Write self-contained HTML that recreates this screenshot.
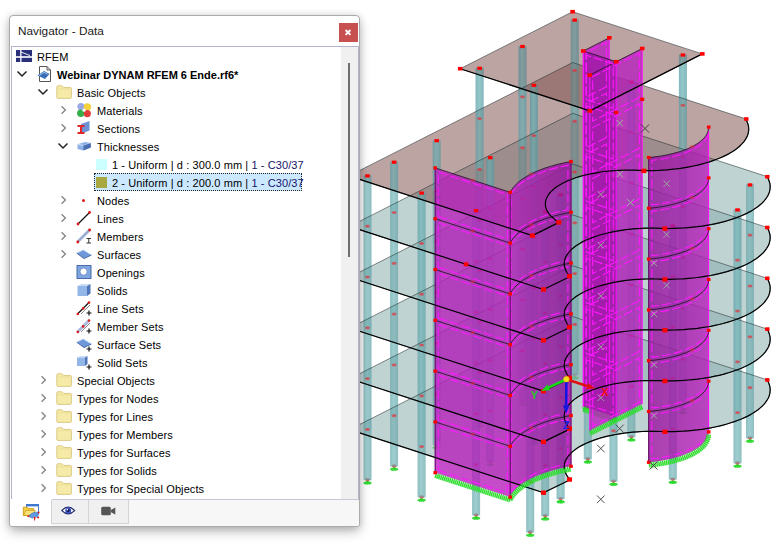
<!DOCTYPE html>
<html><head><meta charset="utf-8"><title>Navigator - Data</title>
<style>
html,body{margin:0;padding:0;background:#fff;}
body{width:772px;height:546px;position:relative;overflow:hidden;font-family:"Liberation Sans",sans-serif;}
#panel{position:absolute;left:9px;top:15px;width:351px;height:512px;box-sizing:border-box;background:#fff;border:1px solid #ababab;border-radius:4px 4px 3px 3px;box-shadow:0 5px 12px -1px rgba(0,0,0,0.30),0 0 7px rgba(0,0,0,0.12);}
#title{position:absolute;left:18px;top:23px;font-size:11.8px;color:#1a1a1a;line-height:16px;white-space:nowrap;}
#close{position:absolute;left:339px;top:23px;width:18.6px;height:18.6px;background:#c75050;}
#tree{position:absolute;left:11px;top:46px;width:347.5px;height:454px;box-sizing:border-box;border:1px solid #b4b4cc;border-bottom:1px solid #c8c8d8;background:#fff;}
#track{position:absolute;left:341px;top:47px;width:16.5px;height:452px;background:#f0f0f0;}
#thumb{position:absolute;left:348px;top:63px;width:2px;height:194px;background:#6e6e6e;}
.row{position:absolute;left:0;width:340px;height:18px;}
.a{position:absolute;display:block;line-height:0;}
.sw{width:10.5px;height:10.5px;}
.t{position:absolute;top:1px;font-size:11px;letter-spacing:0.1px;line-height:18px;color:#000;white-space:nowrap;}
.nv{color:#14146a;}
.t.b{font-weight:bold;letter-spacing:0;}
.sel{position:absolute;left:94px;top:0;width:208px;height:18px;box-sizing:border-box;background:#cce8ff;border:1px dotted #222;}
#tabs{position:absolute;left:10px;top:500px;width:349px;height:26px;background:#f7f7f7;border-radius:0 0 3px 3px;}
.tab{position:absolute;top:500px;height:23.5px;box-sizing:border-box;background:#f0f0f0;border:1px solid #d3d3d8;border-top:none;}
#tab1{position:absolute;left:10px;top:499px;width:42px;height:27px;background:#fff;border-radius:0 0 0 3px;}
</style></head><body>
<svg width="772" height="546" viewBox="0 0 772 546" style="position:absolute;left:0;top:0">
<defs><linearGradient id="cg" x1="0" x2="1" y1="0" y2="0"><stop offset="0" stop-color="rgb(78,152,158)"/><stop offset="0.45" stop-color="rgb(100,176,180)"/><stop offset="1" stop-color="rgb(78,152,158)"/></linearGradient></defs>
<ellipse cx="574.7" cy="378.0" rx="3.9" ry="1.3" fill="#22d822" fill-opacity="0.85" stroke="#10d010" stroke-width="0.8" stroke-dasharray="1.2 0.7"/><path d="M572.3 378.0 L574.7 375.5 L577.1 378.0 Z" fill="#20d820"/><ellipse cx="574.7" cy="374.6" rx="2.4" ry="1.6" fill="#d83030" fill-opacity="0.8"/>
<ellipse cx="522.5" cy="404.4" rx="3.9" ry="1.3" fill="#22d822" fill-opacity="0.85" stroke="#10d010" stroke-width="0.8" stroke-dasharray="1.2 0.7"/><path d="M520.1 404.4 L522.5 401.9 L524.9 404.4 Z" fill="#20d820"/><ellipse cx="522.5" cy="401.0" rx="2.4" ry="1.6" fill="#d83030" fill-opacity="0.8"/>
<ellipse cx="479.6" cy="426.2" rx="3.9" ry="1.3" fill="#22d822" fill-opacity="0.85" stroke="#10d010" stroke-width="0.8" stroke-dasharray="1.2 0.7"/><path d="M477.2 426.2 L479.6 423.7 L482.0 426.2 Z" fill="#20d820"/><ellipse cx="479.6" cy="422.8" rx="2.4" ry="1.6" fill="#d83030" fill-opacity="0.8"/>
<ellipse cx="436.7" cy="447.8" rx="3.9" ry="1.3" fill="#22d822" fill-opacity="0.85" stroke="#10d010" stroke-width="0.8" stroke-dasharray="1.2 0.7"/><path d="M434.3 447.8 L436.7 445.3 L439.1 447.8 Z" fill="#20d820"/><ellipse cx="436.7" cy="444.4" rx="2.4" ry="1.6" fill="#d83030" fill-opacity="0.8"/>
<ellipse cx="394.1" cy="469.3" rx="3.9" ry="1.3" fill="#22d822" fill-opacity="0.85" stroke="#10d010" stroke-width="0.8" stroke-dasharray="1.2 0.7"/><path d="M391.7 469.3 L394.1 466.8 L396.5 469.3 Z" fill="#20d820"/><ellipse cx="394.1" cy="465.9" rx="2.4" ry="1.6" fill="#d83030" fill-opacity="0.8"/>
<ellipse cx="367.5" cy="483.0" rx="3.9" ry="1.3" fill="#22d822" fill-opacity="0.85" stroke="#10d010" stroke-width="0.8" stroke-dasharray="1.2 0.7"/><path d="M365.1 483.0 L367.5 480.5 L369.9 483.0 Z" fill="#20d820"/><ellipse cx="367.5" cy="479.6" rx="2.4" ry="1.6" fill="#d83030" fill-opacity="0.8"/>
<ellipse cx="533.9" cy="443.2" rx="3.9" ry="1.3" fill="#22d822" fill-opacity="0.85" stroke="#10d010" stroke-width="0.8" stroke-dasharray="1.2 0.7"/><path d="M531.5 443.2 L533.9 440.7 L536.3 443.2 Z" fill="#20d820"/><ellipse cx="533.9" cy="439.8" rx="2.4" ry="1.6" fill="#d83030" fill-opacity="0.8"/>
<ellipse cx="490.2" cy="464.8" rx="3.9" ry="1.3" fill="#22d822" fill-opacity="0.85" stroke="#10d010" stroke-width="0.8" stroke-dasharray="1.2 0.7"/><path d="M487.8 464.8 L490.2 462.3 L492.6 464.8 Z" fill="#20d820"/><ellipse cx="490.2" cy="461.4" rx="2.4" ry="1.6" fill="#d83030" fill-opacity="0.8"/>
<ellipse cx="421.6" cy="500.2" rx="3.9" ry="1.3" fill="#22d822" fill-opacity="0.85" stroke="#10d010" stroke-width="0.8" stroke-dasharray="1.2 0.7"/><path d="M419.2 500.2 L421.6 497.7 L424.0 500.2 Z" fill="#20d820"/><ellipse cx="421.6" cy="496.8" rx="2.4" ry="1.6" fill="#d83030" fill-opacity="0.8"/>
<ellipse cx="682.9" cy="412.9" rx="3.9" ry="1.3" fill="#22d822" fill-opacity="0.85" stroke="#10d010" stroke-width="0.8" stroke-dasharray="1.2 0.7"/><path d="M680.5 412.9 L682.9 410.4 L685.3 412.9 Z" fill="#20d820"/><ellipse cx="682.9" cy="409.5" rx="2.4" ry="1.6" fill="#d83030" fill-opacity="0.8"/>
<ellipse cx="631.4" cy="440.0" rx="3.9" ry="1.3" fill="#22d822" fill-opacity="0.85" stroke="#10d010" stroke-width="0.8" stroke-dasharray="1.2 0.7"/><path d="M629.0 440.0 L631.4 437.5 L633.8 440.0 Z" fill="#20d820"/><ellipse cx="631.4" cy="436.6" rx="2.4" ry="1.6" fill="#d83030" fill-opacity="0.8"/>
<ellipse cx="587.8" cy="462.1" rx="3.9" ry="1.3" fill="#22d822" fill-opacity="0.85" stroke="#10d010" stroke-width="0.8" stroke-dasharray="1.2 0.7"/><path d="M585.4 462.1 L587.8 459.6 L590.2 462.1 Z" fill="#20d820"/><ellipse cx="587.8" cy="458.7" rx="2.4" ry="1.6" fill="#d83030" fill-opacity="0.8"/>
<ellipse cx="476.1" cy="518.2" rx="3.9" ry="1.3" fill="#22d822" fill-opacity="0.85" stroke="#10d010" stroke-width="0.8" stroke-dasharray="1.2 0.7"/><path d="M473.7 518.2 L476.1 515.7 L478.5 518.2 Z" fill="#20d820"/><ellipse cx="476.1" cy="514.8" rx="2.4" ry="1.6" fill="#d83030" fill-opacity="0.8"/>
<ellipse cx="530.2" cy="535.3" rx="3.9" ry="1.3" fill="#22d822" fill-opacity="0.85" stroke="#10d010" stroke-width="0.8" stroke-dasharray="1.2 0.7"/><path d="M527.8 535.3 L530.2 532.8 L532.6 535.3 Z" fill="#20d820"/><ellipse cx="530.2" cy="531.9" rx="2.4" ry="1.6" fill="#d83030" fill-opacity="0.8"/>
<ellipse cx="545.2" cy="519.0" rx="3.9" ry="1.3" fill="#22d822" fill-opacity="0.85" stroke="#10d010" stroke-width="0.8" stroke-dasharray="1.2 0.7"/><path d="M542.8 519.0 L545.2 516.5 L547.6 519.0 Z" fill="#20d820"/><ellipse cx="545.2" cy="515.6" rx="2.4" ry="1.6" fill="#d83030" fill-opacity="0.8"/>
<ellipse cx="560.6" cy="501.9" rx="3.9" ry="1.3" fill="#22d822" fill-opacity="0.85" stroke="#10d010" stroke-width="0.8" stroke-dasharray="1.2 0.7"/><path d="M558.2 501.9 L560.6 499.4 L563.0 501.9 Z" fill="#20d820"/><ellipse cx="560.6" cy="498.5" rx="2.4" ry="1.6" fill="#d83030" fill-opacity="0.8"/>
<ellipse cx="613.5" cy="484.4" rx="3.9" ry="1.3" fill="#22d822" fill-opacity="0.85" stroke="#10d010" stroke-width="0.8" stroke-dasharray="1.2 0.7"/><path d="M611.1 484.4 L613.5 481.9 L615.9 484.4 Z" fill="#20d820"/><ellipse cx="613.5" cy="481.0" rx="2.4" ry="1.6" fill="#d83030" fill-opacity="0.8"/>
<ellipse cx="750.0" cy="441.2" rx="3.9" ry="1.3" fill="#22d822" fill-opacity="0.85" stroke="#10d010" stroke-width="0.8" stroke-dasharray="1.2 0.7"/><path d="M747.6 441.2 L750.0 438.7 L752.4 441.2 Z" fill="#20d820"/><ellipse cx="750.0" cy="437.8" rx="2.4" ry="1.6" fill="#d83030" fill-opacity="0.8"/>
<ellipse cx="737.5" cy="466.2" rx="3.9" ry="1.3" fill="#22d822" fill-opacity="0.85" stroke="#10d010" stroke-width="0.8" stroke-dasharray="1.2 0.7"/><path d="M735.1 466.2 L737.5 463.7 L739.9 466.2 Z" fill="#20d820"/><ellipse cx="737.5" cy="462.8" rx="2.4" ry="1.6" fill="#d83030" fill-opacity="0.8"/>
<ellipse cx="672.8" cy="482.4" rx="3.9" ry="1.3" fill="#22d822" fill-opacity="0.85" stroke="#10d010" stroke-width="0.8" stroke-dasharray="1.2 0.7"/><path d="M670.4 482.4 L672.8 479.9 L675.2 482.4 Z" fill="#20d820"/><ellipse cx="672.8" cy="479.0" rx="2.4" ry="1.6" fill="#d83030" fill-opacity="0.8"/>
<rect x="570.7" y="324.35" width="8.0" height="50.80" fill="url(#cg)" fill-opacity="0.5"/>
<rect x="518.5" y="350.82" width="8.0" height="50.80" fill="url(#cg)" fill-opacity="0.5"/>
<rect x="475.6" y="372.57" width="8.0" height="50.80" fill="url(#cg)" fill-opacity="0.5"/>
<rect x="432.7" y="394.23" width="8.0" height="50.80" fill="url(#cg)" fill-opacity="0.5"/>
<rect x="390.1" y="415.73" width="8.0" height="50.80" fill="url(#cg)" fill-opacity="0.5"/>
<rect x="363.5" y="429.40" width="8.0" height="50.80" fill="url(#cg)" fill-opacity="0.5"/>
<rect x="529.9" y="389.64" width="8.0" height="50.80" fill="url(#cg)" fill-opacity="0.5"/>
<rect x="486.2" y="411.23" width="8.0" height="50.80" fill="url(#cg)" fill-opacity="0.5"/>
<rect x="417.6" y="446.57" width="8.0" height="50.80" fill="url(#cg)" fill-opacity="0.5"/>
<rect x="678.9" y="359.29" width="8.0" height="50.80" fill="url(#cg)" fill-opacity="0.5"/>
<rect x="627.4" y="386.41" width="8.0" height="50.80" fill="url(#cg)" fill-opacity="0.5"/>
<rect x="583.8" y="408.52" width="8.0" height="50.80" fill="url(#cg)" fill-opacity="0.5"/>
<rect x="472.1" y="464.64" width="8.0" height="50.80" fill="url(#cg)" fill-opacity="0.5"/>
<rect x="526.2" y="481.67" width="8.0" height="50.80" fill="url(#cg)" fill-opacity="0.5"/>
<rect x="541.2" y="465.42" width="8.0" height="50.80" fill="url(#cg)" fill-opacity="0.5"/>
<rect x="556.6" y="448.28" width="8.0" height="50.80" fill="url(#cg)" fill-opacity="0.5"/>
<rect x="609.5" y="430.79" width="8.0" height="50.80" fill="url(#cg)" fill-opacity="0.5"/>
<rect x="746.0" y="387.56" width="8.0" height="50.80" fill="url(#cg)" fill-opacity="0.5"/>
<rect x="733.5" y="412.61" width="8.0" height="50.80" fill="url(#cg)" fill-opacity="0.5"/>
<rect x="668.8" y="428.78" width="8.0" height="50.80" fill="url(#cg)" fill-opacity="0.5"/>
<polygon points="572.6,316.5 767.0,379.8 768.1,381.6 768.9,383.5 769.5,385.4 770.0,387.4 770.2,389.3 770.1,391.2 769.9,393.1 769.4,395.1 768.8,397.0 767.9,398.8 766.7,400.7 765.4,402.6 763.9,404.4 762.2,406.2 760.2,407.9 758.1,409.7 755.8,411.3 753.2,413.0 750.5,414.6 747.7,416.1 744.6,417.6 741.4,419.0 738.0,420.3 734.5,421.6 730.8,422.8 727.0,424.0 723.1,425.1 719.1,426.1 714.9,427.0 710.7,427.9 706.3,428.6 701.9,429.3 697.4,429.9 692.8,430.4 688.2,430.8 683.5,431.2 678.8,431.4 674.1,431.6 669.4,431.7 664.6,431.7 660.2,431.5 655.7,431.4 651.1,431.3 646.5,431.4 642.0,431.5 637.4,431.8 632.9,432.1 628.5,432.6 624.1,433.1 619.8,433.8 615.6,434.5 611.5,435.3 607.5,436.2 603.6,437.2 599.8,438.2 596.2,439.4 592.8,440.6 589.5,441.9 586.3,443.2 583.4,444.6 580.6,446.1 578.1,447.6 575.7,449.2 573.5,450.9 571.6,452.5 569.9,454.3 568.4,456.0 567.1,457.8 566.0,459.6 565.2,461.4 564.6,463.3 564.3,465.1 564.2,467.0 564.4,468.8 564.7,470.7 565.4,472.5 566.2,474.4 567.3,476.2 568.6,477.9 570.2,479.7 543.5,492.7 349.6,429.6" fill="rgb(134,170,170)" fill-opacity="0.52"/>
<rect x="570.7" y="273.55" width="8.0" height="50.80" fill="url(#cg)" fill-opacity="0.5"/>
<rect x="518.5" y="300.02" width="8.0" height="50.80" fill="url(#cg)" fill-opacity="0.5"/>
<rect x="475.6" y="321.77" width="8.0" height="50.80" fill="url(#cg)" fill-opacity="0.5"/>
<rect x="432.7" y="343.43" width="8.0" height="50.80" fill="url(#cg)" fill-opacity="0.5"/>
<rect x="390.1" y="364.93" width="8.0" height="50.80" fill="url(#cg)" fill-opacity="0.5"/>
<rect x="363.5" y="378.60" width="8.0" height="50.80" fill="url(#cg)" fill-opacity="0.5"/>
<rect x="529.9" y="338.84" width="8.0" height="50.80" fill="url(#cg)" fill-opacity="0.5"/>
<rect x="486.2" y="360.43" width="8.0" height="50.80" fill="url(#cg)" fill-opacity="0.5"/>
<rect x="417.6" y="395.77" width="8.0" height="50.80" fill="url(#cg)" fill-opacity="0.5"/>
<rect x="678.9" y="308.49" width="8.0" height="50.80" fill="url(#cg)" fill-opacity="0.5"/>
<rect x="627.4" y="335.61" width="8.0" height="50.80" fill="url(#cg)" fill-opacity="0.5"/>
<rect x="583.8" y="357.72" width="8.0" height="50.80" fill="url(#cg)" fill-opacity="0.5"/>
<rect x="472.1" y="413.84" width="8.0" height="50.80" fill="url(#cg)" fill-opacity="0.5"/>
<rect x="526.2" y="430.87" width="8.0" height="50.80" fill="url(#cg)" fill-opacity="0.5"/>
<rect x="541.2" y="414.62" width="8.0" height="50.80" fill="url(#cg)" fill-opacity="0.5"/>
<rect x="556.6" y="397.48" width="8.0" height="50.80" fill="url(#cg)" fill-opacity="0.5"/>
<rect x="609.5" y="379.99" width="8.0" height="50.80" fill="url(#cg)" fill-opacity="0.5"/>
<rect x="746.0" y="336.76" width="8.0" height="50.80" fill="url(#cg)" fill-opacity="0.5"/>
<rect x="733.5" y="361.81" width="8.0" height="50.80" fill="url(#cg)" fill-opacity="0.5"/>
<rect x="668.8" y="377.98" width="8.0" height="50.80" fill="url(#cg)" fill-opacity="0.5"/>
<polygon points="572.6,265.7 767.0,329.0 768.1,330.8 768.9,332.7 769.5,334.6 770.0,336.6 770.2,338.5 770.1,340.4 769.9,342.3 769.4,344.3 768.8,346.2 767.9,348.0 766.7,349.9 765.4,351.8 763.9,353.6 762.2,355.4 760.2,357.1 758.1,358.9 755.8,360.5 753.2,362.2 750.5,363.8 747.7,365.3 744.6,366.8 741.4,368.2 738.0,369.5 734.5,370.8 730.8,372.0 727.0,373.2 723.1,374.3 719.1,375.3 714.9,376.2 710.7,377.1 706.3,377.8 701.9,378.5 697.4,379.1 692.8,379.6 688.2,380.0 683.5,380.4 678.8,380.6 674.1,380.8 669.4,380.9 664.6,380.9 660.2,380.7 655.7,380.6 651.1,380.5 646.5,380.6 642.0,380.7 637.4,381.0 632.9,381.3 628.5,381.8 624.1,382.3 619.8,383.0 615.6,383.7 611.5,384.5 607.5,385.4 603.6,386.4 599.8,387.4 596.2,388.6 592.8,389.8 589.5,391.1 586.3,392.4 583.4,393.8 580.6,395.3 578.1,396.8 575.7,398.4 573.5,400.1 571.6,401.7 569.9,403.5 568.4,405.2 567.1,407.0 566.0,408.8 565.2,410.6 564.6,412.5 564.3,414.3 564.2,416.2 564.4,418.0 564.7,419.9 565.4,421.7 566.2,423.6 567.3,425.4 568.6,427.1 570.2,428.9 543.5,441.9 349.6,378.8" fill="rgb(134,170,170)" fill-opacity="0.52"/>
<rect x="570.7" y="222.75" width="8.0" height="50.80" fill="url(#cg)" fill-opacity="0.5"/>
<rect x="518.5" y="249.22" width="8.0" height="50.80" fill="url(#cg)" fill-opacity="0.5"/>
<rect x="475.6" y="270.97" width="8.0" height="50.80" fill="url(#cg)" fill-opacity="0.5"/>
<rect x="432.7" y="292.63" width="8.0" height="50.80" fill="url(#cg)" fill-opacity="0.5"/>
<rect x="390.1" y="314.13" width="8.0" height="50.80" fill="url(#cg)" fill-opacity="0.5"/>
<rect x="363.5" y="327.80" width="8.0" height="50.80" fill="url(#cg)" fill-opacity="0.5"/>
<rect x="529.9" y="288.04" width="8.0" height="50.80" fill="url(#cg)" fill-opacity="0.5"/>
<rect x="486.2" y="309.63" width="8.0" height="50.80" fill="url(#cg)" fill-opacity="0.5"/>
<rect x="417.6" y="344.97" width="8.0" height="50.80" fill="url(#cg)" fill-opacity="0.5"/>
<rect x="678.9" y="257.69" width="8.0" height="50.80" fill="url(#cg)" fill-opacity="0.5"/>
<rect x="627.4" y="284.81" width="8.0" height="50.80" fill="url(#cg)" fill-opacity="0.5"/>
<rect x="583.8" y="306.92" width="8.0" height="50.80" fill="url(#cg)" fill-opacity="0.5"/>
<rect x="472.1" y="363.04" width="8.0" height="50.80" fill="url(#cg)" fill-opacity="0.5"/>
<rect x="526.2" y="380.07" width="8.0" height="50.80" fill="url(#cg)" fill-opacity="0.5"/>
<rect x="541.2" y="363.82" width="8.0" height="50.80" fill="url(#cg)" fill-opacity="0.5"/>
<rect x="556.6" y="346.68" width="8.0" height="50.80" fill="url(#cg)" fill-opacity="0.5"/>
<rect x="609.5" y="329.19" width="8.0" height="50.80" fill="url(#cg)" fill-opacity="0.5"/>
<rect x="746.0" y="285.96" width="8.0" height="50.80" fill="url(#cg)" fill-opacity="0.5"/>
<rect x="733.5" y="311.01" width="8.0" height="50.80" fill="url(#cg)" fill-opacity="0.5"/>
<rect x="668.8" y="327.18" width="8.0" height="50.80" fill="url(#cg)" fill-opacity="0.5"/>
<polygon points="572.6,214.9 767.0,278.2 768.1,280.0 768.9,281.9 769.5,283.8 770.0,285.8 770.2,287.7 770.1,289.6 769.9,291.5 769.4,293.5 768.8,295.4 767.9,297.2 766.7,299.1 765.4,301.0 763.9,302.8 762.2,304.6 760.2,306.3 758.1,308.1 755.8,309.7 753.2,311.4 750.5,313.0 747.7,314.5 744.6,316.0 741.4,317.4 738.0,318.7 734.5,320.0 730.8,321.2 727.0,322.4 723.1,323.5 719.1,324.5 714.9,325.4 710.7,326.3 706.3,327.0 701.9,327.7 697.4,328.3 692.8,328.8 688.2,329.2 683.5,329.6 678.8,329.8 674.1,330.0 669.4,330.1 664.6,330.1 660.2,329.9 655.7,329.8 651.1,329.7 646.5,329.8 642.0,329.9 637.4,330.2 632.9,330.5 628.5,331.0 624.1,331.5 619.8,332.2 615.6,332.9 611.5,333.7 607.5,334.6 603.6,335.6 599.8,336.6 596.2,337.8 592.8,339.0 589.5,340.3 586.3,341.6 583.4,343.0 580.6,344.5 578.1,346.0 575.7,347.6 573.5,349.3 571.6,350.9 569.9,352.7 568.4,354.4 567.1,356.2 566.0,358.0 565.2,359.8 564.6,361.7 564.3,363.5 564.2,365.4 564.4,367.2 564.7,369.1 565.4,370.9 566.2,372.8 567.3,374.6 568.6,376.3 570.2,378.1 543.5,391.1 349.6,328.0" fill="rgb(134,170,170)" fill-opacity="0.52"/>
<rect x="570.7" y="171.95" width="8.0" height="50.80" fill="url(#cg)" fill-opacity="0.5"/>
<rect x="518.5" y="198.42" width="8.0" height="50.80" fill="url(#cg)" fill-opacity="0.5"/>
<rect x="475.6" y="220.17" width="8.0" height="50.80" fill="url(#cg)" fill-opacity="0.5"/>
<rect x="432.7" y="241.83" width="8.0" height="50.80" fill="url(#cg)" fill-opacity="0.5"/>
<rect x="390.1" y="263.33" width="8.0" height="50.80" fill="url(#cg)" fill-opacity="0.5"/>
<rect x="363.5" y="277.00" width="8.0" height="50.80" fill="url(#cg)" fill-opacity="0.5"/>
<rect x="529.9" y="237.24" width="8.0" height="50.80" fill="url(#cg)" fill-opacity="0.5"/>
<rect x="486.2" y="258.83" width="8.0" height="50.80" fill="url(#cg)" fill-opacity="0.5"/>
<rect x="417.6" y="294.17" width="8.0" height="50.80" fill="url(#cg)" fill-opacity="0.5"/>
<rect x="678.9" y="206.89" width="8.0" height="50.80" fill="url(#cg)" fill-opacity="0.5"/>
<rect x="627.4" y="234.01" width="8.0" height="50.80" fill="url(#cg)" fill-opacity="0.5"/>
<rect x="583.8" y="256.12" width="8.0" height="50.80" fill="url(#cg)" fill-opacity="0.5"/>
<rect x="472.1" y="312.24" width="8.0" height="50.80" fill="url(#cg)" fill-opacity="0.5"/>
<rect x="526.2" y="329.27" width="8.0" height="50.80" fill="url(#cg)" fill-opacity="0.5"/>
<rect x="541.2" y="313.02" width="8.0" height="50.80" fill="url(#cg)" fill-opacity="0.5"/>
<rect x="556.6" y="295.88" width="8.0" height="50.80" fill="url(#cg)" fill-opacity="0.5"/>
<rect x="609.5" y="278.39" width="8.0" height="50.80" fill="url(#cg)" fill-opacity="0.5"/>
<rect x="746.0" y="235.16" width="8.0" height="50.80" fill="url(#cg)" fill-opacity="0.5"/>
<rect x="733.5" y="260.21" width="8.0" height="50.80" fill="url(#cg)" fill-opacity="0.5"/>
<rect x="668.8" y="276.38" width="8.0" height="50.80" fill="url(#cg)" fill-opacity="0.5"/>
<polygon points="572.6,164.1 767.0,227.4 768.1,229.2 768.9,231.1 769.5,233.0 770.0,235.0 770.2,236.9 770.1,238.8 769.9,240.7 769.4,242.7 768.8,244.6 767.9,246.4 766.7,248.3 765.4,250.2 763.9,252.0 762.2,253.8 760.2,255.5 758.1,257.3 755.8,258.9 753.2,260.6 750.5,262.2 747.7,263.7 744.6,265.2 741.4,266.6 738.0,267.9 734.5,269.2 730.8,270.4 727.0,271.6 723.1,272.7 719.1,273.7 714.9,274.6 710.7,275.5 706.3,276.2 701.9,276.9 697.4,277.5 692.8,278.0 688.2,278.4 683.5,278.8 678.8,279.0 674.1,279.2 669.4,279.3 664.6,279.3 660.2,279.1 655.7,279.0 651.1,278.9 646.5,279.0 642.0,279.1 637.4,279.4 632.9,279.7 628.5,280.2 624.1,280.7 619.8,281.4 615.6,282.1 611.5,282.9 607.5,283.8 603.6,284.8 599.8,285.8 596.2,287.0 592.8,288.2 589.5,289.5 586.3,290.8 583.4,292.2 580.6,293.7 578.1,295.2 575.7,296.8 573.5,298.5 571.6,300.1 569.9,301.9 568.4,303.6 567.1,305.4 566.0,307.2 565.2,309.0 564.6,310.9 564.3,312.7 564.2,314.6 564.4,316.4 564.7,318.3 565.4,320.1 566.2,322.0 567.3,323.8 568.6,325.5 570.2,327.3 543.5,340.3 349.6,277.2" fill="rgb(134,170,170)" fill-opacity="0.52"/>
<rect x="570.7" y="121.15" width="8.0" height="50.80" fill="url(#cg)" fill-opacity="0.5"/>
<rect x="518.5" y="147.62" width="8.0" height="50.80" fill="url(#cg)" fill-opacity="0.5"/>
<rect x="475.6" y="169.37" width="8.0" height="50.80" fill="url(#cg)" fill-opacity="0.5"/>
<rect x="432.7" y="191.03" width="8.0" height="50.80" fill="url(#cg)" fill-opacity="0.5"/>
<rect x="390.1" y="212.53" width="8.0" height="50.80" fill="url(#cg)" fill-opacity="0.5"/>
<rect x="363.5" y="226.20" width="8.0" height="50.80" fill="url(#cg)" fill-opacity="0.5"/>
<rect x="529.9" y="186.44" width="8.0" height="50.80" fill="url(#cg)" fill-opacity="0.5"/>
<rect x="486.2" y="208.03" width="8.0" height="50.80" fill="url(#cg)" fill-opacity="0.5"/>
<rect x="417.6" y="243.37" width="8.0" height="50.80" fill="url(#cg)" fill-opacity="0.5"/>
<rect x="678.9" y="156.09" width="8.0" height="50.80" fill="url(#cg)" fill-opacity="0.5"/>
<rect x="627.4" y="183.21" width="8.0" height="50.80" fill="url(#cg)" fill-opacity="0.5"/>
<rect x="583.8" y="205.32" width="8.0" height="50.80" fill="url(#cg)" fill-opacity="0.5"/>
<rect x="472.1" y="261.44" width="8.0" height="50.80" fill="url(#cg)" fill-opacity="0.5"/>
<rect x="526.2" y="278.47" width="8.0" height="50.80" fill="url(#cg)" fill-opacity="0.5"/>
<rect x="541.2" y="262.22" width="8.0" height="50.80" fill="url(#cg)" fill-opacity="0.5"/>
<rect x="556.6" y="245.08" width="8.0" height="50.80" fill="url(#cg)" fill-opacity="0.5"/>
<rect x="609.5" y="227.59" width="8.0" height="50.80" fill="url(#cg)" fill-opacity="0.5"/>
<rect x="746.0" y="184.36" width="8.0" height="50.80" fill="url(#cg)" fill-opacity="0.5"/>
<rect x="733.5" y="209.41" width="8.0" height="50.80" fill="url(#cg)" fill-opacity="0.5"/>
<rect x="668.8" y="225.58" width="8.0" height="50.80" fill="url(#cg)" fill-opacity="0.5"/>
<polygon points="572.6,113.3 767.0,176.6 768.1,178.4 768.9,180.3 769.5,182.2 770.0,184.2 770.2,186.1 770.1,188.0 769.9,189.9 769.4,191.9 768.8,193.8 767.9,195.6 766.7,197.5 765.4,199.4 763.9,201.2 762.2,203.0 760.2,204.7 758.1,206.5 755.8,208.1 753.2,209.8 750.5,211.4 747.7,212.9 744.6,214.4 741.4,215.8 738.0,217.1 734.5,218.4 730.8,219.6 727.0,220.8 723.1,221.9 719.1,222.9 714.9,223.8 710.7,224.7 706.3,225.4 701.9,226.1 697.4,226.7 692.8,227.2 688.2,227.6 683.5,228.0 678.8,228.2 674.1,228.4 669.4,228.5 664.6,228.5 660.2,228.3 655.7,228.2 651.1,228.1 646.5,228.2 642.0,228.3 637.4,228.6 632.9,228.9 628.5,229.4 624.1,229.9 619.8,230.6 615.6,231.3 611.5,232.1 607.5,233.0 603.6,234.0 599.8,235.0 596.2,236.2 592.8,237.4 589.5,238.7 586.3,240.0 583.4,241.4 580.6,242.9 578.1,244.4 575.7,246.0 573.5,247.7 571.6,249.3 569.9,251.1 568.4,252.8 567.1,254.6 566.0,256.4 565.2,258.2 564.6,260.1 564.3,261.9 564.2,263.8 564.4,265.6 564.7,267.5 565.4,269.3 566.2,271.2 567.3,273.0 568.6,274.7 570.2,276.5 543.5,289.5 349.6,226.4" fill="rgb(134,170,170)" fill-opacity="0.52"/>
<polygon points="572.6,62.5 745.5,118.8 746.6,120.7 747.4,122.6 748.1,124.5 748.5,126.4 748.7,128.3 748.7,130.2 748.4,132.2 748.0,134.1 747.3,136.0 746.4,137.9 745.3,139.7 744.0,141.6 742.4,143.4 740.7,145.2 738.8,147.0 736.6,148.7 734.3,150.4 731.8,152.0 729.1,153.6 726.2,155.1 723.1,156.6 719.9,158.0 716.6,159.3 713.0,160.6 709.4,161.9 705.6,163.0 701.6,164.1 697.6,165.1 693.4,166.0 689.2,166.9 684.8,167.6 680.4,168.3 675.9,168.9 671.3,169.4 666.7,169.9 662.1,170.2 657.4,170.5 652.6,170.6 647.9,170.7 643.2,170.7 639.2,170.4 634.3,170.2 629.5,170.1 624.6,170.2 619.8,170.3 614.9,170.6 610.2,170.9 605.5,171.4 600.8,172.0 596.3,172.8 591.9,173.6 587.6,174.5 583.4,175.5 579.4,176.6 575.6,177.8 571.9,179.2 568.5,180.5 565.2,182.0 562.2,183.5 559.3,185.2 556.8,186.8 554.4,188.6 552.4,190.3 550.5,192.2 549.0,194.0 547.7,196.0 546.7,197.9 546.0,199.8 545.5,201.8 545.4,203.8 545.5,205.8 545.9,207.7 546.6,209.7 547.6,211.6 548.8,213.5 550.3,215.4 552.1,217.2 554.2,219.0 556.5,220.8 559.0,222.4 532.4,235.6 348.9,175.9" fill="rgb(121,73,71)" fill-opacity="0.5"/>
<rect x="570.7" y="70.35" width="8.0" height="50.80" fill="url(#cg)" fill-opacity="0.5"/>
<rect x="518.5" y="96.82" width="8.0" height="50.80" fill="url(#cg)" fill-opacity="0.5"/>
<rect x="475.6" y="118.57" width="8.0" height="50.80" fill="url(#cg)" fill-opacity="0.5"/>
<rect x="432.7" y="140.23" width="8.0" height="50.80" fill="url(#cg)" fill-opacity="0.5"/>
<rect x="390.1" y="161.73" width="8.0" height="50.80" fill="url(#cg)" fill-opacity="0.5"/>
<rect x="363.5" y="175.40" width="8.0" height="50.80" fill="url(#cg)" fill-opacity="0.5"/>
<rect x="529.9" y="135.64" width="8.0" height="50.80" fill="url(#cg)" fill-opacity="0.5"/>
<rect x="486.2" y="157.23" width="8.0" height="50.80" fill="url(#cg)" fill-opacity="0.5"/>
<rect x="417.6" y="192.57" width="8.0" height="50.80" fill="url(#cg)" fill-opacity="0.5"/>
<rect x="678.9" y="105.29" width="8.0" height="50.80" fill="url(#cg)" fill-opacity="0.5"/>
<rect x="627.4" y="132.41" width="8.0" height="50.80" fill="url(#cg)" fill-opacity="0.5"/>
<rect x="583.8" y="154.52" width="8.0" height="50.80" fill="url(#cg)" fill-opacity="0.5"/>
<rect x="472.1" y="210.64" width="8.0" height="50.80" fill="url(#cg)" fill-opacity="0.5"/>
<rect x="526.2" y="227.67" width="8.0" height="50.80" fill="url(#cg)" fill-opacity="0.5"/>
<rect x="541.2" y="211.42" width="8.0" height="50.80" fill="url(#cg)" fill-opacity="0.5"/>
<rect x="556.6" y="194.28" width="8.0" height="50.80" fill="url(#cg)" fill-opacity="0.5"/>
<rect x="609.5" y="176.79" width="8.0" height="50.80" fill="url(#cg)" fill-opacity="0.5"/>
<rect x="570.7" y="19.55" width="8.0" height="50.80" fill="url(#cg)" fill-opacity="0.5"/>
<rect x="518.5" y="46.02" width="8.0" height="50.80" fill="url(#cg)" fill-opacity="0.5"/>
<rect x="475.6" y="67.77" width="8.0" height="50.80" fill="url(#cg)" fill-opacity="0.5"/>
<rect x="529.9" y="84.84" width="8.0" height="50.80" fill="url(#cg)" fill-opacity="0.5"/>
<rect x="678.9" y="54.49" width="8.0" height="50.80" fill="url(#cg)" fill-opacity="0.5"/>
<rect x="627.4" y="81.61" width="8.0" height="50.80" fill="url(#cg)" fill-opacity="0.5"/>
<rect x="583.8" y="103.72" width="8.0" height="50.80" fill="url(#cg)" fill-opacity="0.5"/>
<polygon points="572.6,11.7 702.3,53.9 589.9,110.9 460.2,68.7" fill="rgb(121,73,71)" fill-opacity="0.5"/>
<rect x="570.7" y="19.55" width="8.0" height="50.80" fill="url(#cg)" fill-opacity="0.2"/>
<rect x="518.5" y="46.02" width="8.0" height="50.80" fill="url(#cg)" fill-opacity="0.2"/>
<rect x="475.6" y="67.77" width="8.0" height="50.80" fill="url(#cg)" fill-opacity="0.2"/>
<rect x="529.9" y="84.84" width="8.0" height="50.80" fill="url(#cg)" fill-opacity="0.2"/>
<rect x="678.9" y="54.49" width="8.0" height="50.80" fill="url(#cg)" fill-opacity="0.2"/>
<rect x="627.4" y="81.61" width="8.0" height="50.80" fill="url(#cg)" fill-opacity="0.2"/>
<rect x="583.8" y="103.72" width="8.0" height="50.80" fill="url(#cg)" fill-opacity="0.2"/>
<rect x="570.7" y="324.35" width="8.0" height="50.80" fill="url(#cg)" fill-opacity="0.25"/>
<rect x="518.5" y="350.82" width="8.0" height="50.80" fill="url(#cg)" fill-opacity="0.25"/>
<rect x="475.6" y="372.57" width="8.0" height="50.80" fill="url(#cg)" fill-opacity="0.25"/>
<rect x="432.7" y="394.23" width="8.0" height="50.80" fill="url(#cg)" fill-opacity="0.25"/>
<rect x="390.1" y="415.73" width="8.0" height="50.80" fill="url(#cg)" fill-opacity="0.25"/>
<rect x="363.5" y="429.40" width="8.0" height="50.80" fill="url(#cg)" fill-opacity="0.25"/>
<rect x="529.9" y="389.64" width="8.0" height="50.80" fill="url(#cg)" fill-opacity="0.25"/>
<rect x="486.2" y="411.23" width="8.0" height="50.80" fill="url(#cg)" fill-opacity="0.25"/>
<rect x="417.6" y="446.57" width="8.0" height="50.80" fill="url(#cg)" fill-opacity="0.25"/>
<rect x="678.9" y="359.29" width="8.0" height="50.80" fill="url(#cg)" fill-opacity="0.25"/>
<rect x="627.4" y="386.41" width="8.0" height="50.80" fill="url(#cg)" fill-opacity="0.25"/>
<rect x="583.8" y="408.52" width="8.0" height="50.80" fill="url(#cg)" fill-opacity="0.25"/>
<rect x="472.1" y="464.64" width="8.0" height="50.80" fill="url(#cg)" fill-opacity="0.25"/>
<rect x="526.2" y="481.67" width="8.0" height="50.80" fill="url(#cg)" fill-opacity="0.25"/>
<rect x="541.2" y="465.42" width="8.0" height="50.80" fill="url(#cg)" fill-opacity="0.25"/>
<rect x="556.6" y="448.28" width="8.0" height="50.80" fill="url(#cg)" fill-opacity="0.25"/>
<rect x="609.5" y="430.79" width="8.0" height="50.80" fill="url(#cg)" fill-opacity="0.25"/>
<rect x="746.0" y="387.56" width="8.0" height="50.80" fill="url(#cg)" fill-opacity="0.25"/>
<rect x="733.5" y="412.61" width="8.0" height="50.80" fill="url(#cg)" fill-opacity="0.25"/>
<rect x="668.8" y="428.78" width="8.0" height="50.80" fill="url(#cg)" fill-opacity="0.25"/>
<rect x="570.7" y="273.55" width="8.0" height="50.80" fill="url(#cg)" fill-opacity="0.25"/>
<rect x="518.5" y="300.02" width="8.0" height="50.80" fill="url(#cg)" fill-opacity="0.25"/>
<rect x="475.6" y="321.77" width="8.0" height="50.80" fill="url(#cg)" fill-opacity="0.25"/>
<rect x="432.7" y="343.43" width="8.0" height="50.80" fill="url(#cg)" fill-opacity="0.25"/>
<rect x="390.1" y="364.93" width="8.0" height="50.80" fill="url(#cg)" fill-opacity="0.25"/>
<rect x="363.5" y="378.60" width="8.0" height="50.80" fill="url(#cg)" fill-opacity="0.25"/>
<rect x="529.9" y="338.84" width="8.0" height="50.80" fill="url(#cg)" fill-opacity="0.25"/>
<rect x="486.2" y="360.43" width="8.0" height="50.80" fill="url(#cg)" fill-opacity="0.25"/>
<rect x="417.6" y="395.77" width="8.0" height="50.80" fill="url(#cg)" fill-opacity="0.25"/>
<rect x="678.9" y="308.49" width="8.0" height="50.80" fill="url(#cg)" fill-opacity="0.25"/>
<rect x="627.4" y="335.61" width="8.0" height="50.80" fill="url(#cg)" fill-opacity="0.25"/>
<rect x="583.8" y="357.72" width="8.0" height="50.80" fill="url(#cg)" fill-opacity="0.25"/>
<rect x="472.1" y="413.84" width="8.0" height="50.80" fill="url(#cg)" fill-opacity="0.25"/>
<rect x="526.2" y="430.87" width="8.0" height="50.80" fill="url(#cg)" fill-opacity="0.25"/>
<rect x="541.2" y="414.62" width="8.0" height="50.80" fill="url(#cg)" fill-opacity="0.25"/>
<rect x="556.6" y="397.48" width="8.0" height="50.80" fill="url(#cg)" fill-opacity="0.25"/>
<rect x="609.5" y="379.99" width="8.0" height="50.80" fill="url(#cg)" fill-opacity="0.25"/>
<rect x="746.0" y="336.76" width="8.0" height="50.80" fill="url(#cg)" fill-opacity="0.25"/>
<rect x="733.5" y="361.81" width="8.0" height="50.80" fill="url(#cg)" fill-opacity="0.25"/>
<rect x="668.8" y="377.98" width="8.0" height="50.80" fill="url(#cg)" fill-opacity="0.25"/>
<rect x="570.7" y="222.75" width="8.0" height="50.80" fill="url(#cg)" fill-opacity="0.25"/>
<rect x="518.5" y="249.22" width="8.0" height="50.80" fill="url(#cg)" fill-opacity="0.25"/>
<rect x="475.6" y="270.97" width="8.0" height="50.80" fill="url(#cg)" fill-opacity="0.25"/>
<rect x="432.7" y="292.63" width="8.0" height="50.80" fill="url(#cg)" fill-opacity="0.25"/>
<rect x="390.1" y="314.13" width="8.0" height="50.80" fill="url(#cg)" fill-opacity="0.25"/>
<rect x="363.5" y="327.80" width="8.0" height="50.80" fill="url(#cg)" fill-opacity="0.25"/>
<rect x="529.9" y="288.04" width="8.0" height="50.80" fill="url(#cg)" fill-opacity="0.25"/>
<rect x="486.2" y="309.63" width="8.0" height="50.80" fill="url(#cg)" fill-opacity="0.25"/>
<rect x="417.6" y="344.97" width="8.0" height="50.80" fill="url(#cg)" fill-opacity="0.25"/>
<rect x="678.9" y="257.69" width="8.0" height="50.80" fill="url(#cg)" fill-opacity="0.25"/>
<rect x="627.4" y="284.81" width="8.0" height="50.80" fill="url(#cg)" fill-opacity="0.25"/>
<rect x="583.8" y="306.92" width="8.0" height="50.80" fill="url(#cg)" fill-opacity="0.25"/>
<rect x="472.1" y="363.04" width="8.0" height="50.80" fill="url(#cg)" fill-opacity="0.25"/>
<rect x="526.2" y="380.07" width="8.0" height="50.80" fill="url(#cg)" fill-opacity="0.25"/>
<rect x="541.2" y="363.82" width="8.0" height="50.80" fill="url(#cg)" fill-opacity="0.25"/>
<rect x="556.6" y="346.68" width="8.0" height="50.80" fill="url(#cg)" fill-opacity="0.25"/>
<rect x="609.5" y="329.19" width="8.0" height="50.80" fill="url(#cg)" fill-opacity="0.25"/>
<rect x="746.0" y="285.96" width="8.0" height="50.80" fill="url(#cg)" fill-opacity="0.25"/>
<rect x="733.5" y="311.01" width="8.0" height="50.80" fill="url(#cg)" fill-opacity="0.25"/>
<rect x="668.8" y="327.18" width="8.0" height="50.80" fill="url(#cg)" fill-opacity="0.25"/>
<rect x="570.7" y="171.95" width="8.0" height="50.80" fill="url(#cg)" fill-opacity="0.25"/>
<rect x="518.5" y="198.42" width="8.0" height="50.80" fill="url(#cg)" fill-opacity="0.25"/>
<rect x="475.6" y="220.17" width="8.0" height="50.80" fill="url(#cg)" fill-opacity="0.25"/>
<rect x="432.7" y="241.83" width="8.0" height="50.80" fill="url(#cg)" fill-opacity="0.25"/>
<rect x="390.1" y="263.33" width="8.0" height="50.80" fill="url(#cg)" fill-opacity="0.25"/>
<rect x="363.5" y="277.00" width="8.0" height="50.80" fill="url(#cg)" fill-opacity="0.25"/>
<rect x="529.9" y="237.24" width="8.0" height="50.80" fill="url(#cg)" fill-opacity="0.25"/>
<rect x="486.2" y="258.83" width="8.0" height="50.80" fill="url(#cg)" fill-opacity="0.25"/>
<rect x="417.6" y="294.17" width="8.0" height="50.80" fill="url(#cg)" fill-opacity="0.25"/>
<rect x="678.9" y="206.89" width="8.0" height="50.80" fill="url(#cg)" fill-opacity="0.25"/>
<rect x="627.4" y="234.01" width="8.0" height="50.80" fill="url(#cg)" fill-opacity="0.25"/>
<rect x="583.8" y="256.12" width="8.0" height="50.80" fill="url(#cg)" fill-opacity="0.25"/>
<rect x="472.1" y="312.24" width="8.0" height="50.80" fill="url(#cg)" fill-opacity="0.25"/>
<rect x="526.2" y="329.27" width="8.0" height="50.80" fill="url(#cg)" fill-opacity="0.25"/>
<rect x="541.2" y="313.02" width="8.0" height="50.80" fill="url(#cg)" fill-opacity="0.25"/>
<rect x="556.6" y="295.88" width="8.0" height="50.80" fill="url(#cg)" fill-opacity="0.25"/>
<rect x="609.5" y="278.39" width="8.0" height="50.80" fill="url(#cg)" fill-opacity="0.25"/>
<rect x="746.0" y="235.16" width="8.0" height="50.80" fill="url(#cg)" fill-opacity="0.25"/>
<rect x="733.5" y="260.21" width="8.0" height="50.80" fill="url(#cg)" fill-opacity="0.25"/>
<rect x="668.8" y="276.38" width="8.0" height="50.80" fill="url(#cg)" fill-opacity="0.25"/>
<rect x="570.7" y="121.15" width="8.0" height="50.80" fill="url(#cg)" fill-opacity="0.25"/>
<rect x="518.5" y="147.62" width="8.0" height="50.80" fill="url(#cg)" fill-opacity="0.25"/>
<rect x="475.6" y="169.37" width="8.0" height="50.80" fill="url(#cg)" fill-opacity="0.25"/>
<rect x="432.7" y="191.03" width="8.0" height="50.80" fill="url(#cg)" fill-opacity="0.25"/>
<rect x="390.1" y="212.53" width="8.0" height="50.80" fill="url(#cg)" fill-opacity="0.25"/>
<rect x="363.5" y="226.20" width="8.0" height="50.80" fill="url(#cg)" fill-opacity="0.25"/>
<rect x="529.9" y="186.44" width="8.0" height="50.80" fill="url(#cg)" fill-opacity="0.25"/>
<rect x="486.2" y="208.03" width="8.0" height="50.80" fill="url(#cg)" fill-opacity="0.25"/>
<rect x="417.6" y="243.37" width="8.0" height="50.80" fill="url(#cg)" fill-opacity="0.25"/>
<rect x="678.9" y="156.09" width="8.0" height="50.80" fill="url(#cg)" fill-opacity="0.25"/>
<rect x="627.4" y="183.21" width="8.0" height="50.80" fill="url(#cg)" fill-opacity="0.25"/>
<rect x="583.8" y="205.32" width="8.0" height="50.80" fill="url(#cg)" fill-opacity="0.25"/>
<rect x="472.1" y="261.44" width="8.0" height="50.80" fill="url(#cg)" fill-opacity="0.25"/>
<rect x="526.2" y="278.47" width="8.0" height="50.80" fill="url(#cg)" fill-opacity="0.25"/>
<rect x="541.2" y="262.22" width="8.0" height="50.80" fill="url(#cg)" fill-opacity="0.25"/>
<rect x="556.6" y="245.08" width="8.0" height="50.80" fill="url(#cg)" fill-opacity="0.25"/>
<rect x="609.5" y="227.59" width="8.0" height="50.80" fill="url(#cg)" fill-opacity="0.25"/>
<rect x="746.0" y="184.36" width="8.0" height="50.80" fill="url(#cg)" fill-opacity="0.25"/>
<rect x="733.5" y="209.41" width="8.0" height="50.80" fill="url(#cg)" fill-opacity="0.25"/>
<rect x="668.8" y="225.58" width="8.0" height="50.80" fill="url(#cg)" fill-opacity="0.25"/>
<rect x="570.7" y="70.35" width="8.0" height="50.80" fill="url(#cg)" fill-opacity="0.25"/>
<rect x="518.5" y="96.82" width="8.0" height="50.80" fill="url(#cg)" fill-opacity="0.25"/>
<rect x="475.6" y="118.57" width="8.0" height="50.80" fill="url(#cg)" fill-opacity="0.25"/>
<rect x="432.7" y="140.23" width="8.0" height="50.80" fill="url(#cg)" fill-opacity="0.25"/>
<rect x="390.1" y="161.73" width="8.0" height="50.80" fill="url(#cg)" fill-opacity="0.25"/>
<rect x="363.5" y="175.40" width="8.0" height="50.80" fill="url(#cg)" fill-opacity="0.25"/>
<rect x="529.9" y="135.64" width="8.0" height="50.80" fill="url(#cg)" fill-opacity="0.25"/>
<rect x="486.2" y="157.23" width="8.0" height="50.80" fill="url(#cg)" fill-opacity="0.25"/>
<rect x="417.6" y="192.57" width="8.0" height="50.80" fill="url(#cg)" fill-opacity="0.25"/>
<rect x="678.9" y="105.29" width="8.0" height="50.80" fill="url(#cg)" fill-opacity="0.25"/>
<rect x="627.4" y="132.41" width="8.0" height="50.80" fill="url(#cg)" fill-opacity="0.25"/>
<rect x="583.8" y="154.52" width="8.0" height="50.80" fill="url(#cg)" fill-opacity="0.25"/>
<rect x="472.1" y="210.64" width="8.0" height="50.80" fill="url(#cg)" fill-opacity="0.25"/>
<rect x="526.2" y="227.67" width="8.0" height="50.80" fill="url(#cg)" fill-opacity="0.25"/>
<rect x="541.2" y="211.42" width="8.0" height="50.80" fill="url(#cg)" fill-opacity="0.25"/>
<rect x="556.6" y="194.28" width="8.0" height="50.80" fill="url(#cg)" fill-opacity="0.25"/>
<rect x="609.5" y="176.79" width="8.0" height="50.80" fill="url(#cg)" fill-opacity="0.25"/>
<rect x="570.7" y="19.55" width="8.0" height="50.80" fill="url(#cg)" fill-opacity="0.25"/>
<rect x="518.5" y="46.02" width="8.0" height="50.80" fill="url(#cg)" fill-opacity="0.25"/>
<rect x="475.6" y="67.77" width="8.0" height="50.80" fill="url(#cg)" fill-opacity="0.25"/>
<rect x="529.9" y="84.84" width="8.0" height="50.80" fill="url(#cg)" fill-opacity="0.25"/>
<rect x="678.9" y="54.49" width="8.0" height="50.80" fill="url(#cg)" fill-opacity="0.25"/>
<rect x="627.4" y="81.61" width="8.0" height="50.80" fill="url(#cg)" fill-opacity="0.25"/>
<rect x="583.8" y="103.72" width="8.0" height="50.80" fill="url(#cg)" fill-opacity="0.25"/>
<polygon points="572.6,316.5 767.0,379.8 768.1,381.6 768.9,383.5 769.5,385.4 770.0,387.4 770.2,389.3 770.1,391.2 769.9,393.1 769.4,395.1 768.8,397.0 767.9,398.8 766.7,400.7 765.4,402.6 763.9,404.4 762.2,406.2 760.2,407.9 758.1,409.7 755.8,411.3 753.2,413.0 750.5,414.6 747.7,416.1 744.6,417.6 741.4,419.0 738.0,420.3 734.5,421.6 730.8,422.8 727.0,424.0 723.1,425.1 719.1,426.1 714.9,427.0 710.7,427.9 706.3,428.6 701.9,429.3 697.4,429.9 692.8,430.4 688.2,430.8 683.5,431.2 678.8,431.4 674.1,431.6 669.4,431.7 664.6,431.7 660.2,431.5 655.7,431.4 651.1,431.3 646.5,431.4 642.0,431.5 637.4,431.8 632.9,432.1 628.5,432.6 624.1,433.1 619.8,433.8 615.6,434.5 611.5,435.3 607.5,436.2 603.6,437.2 599.8,438.2 596.2,439.4 592.8,440.6 589.5,441.9 586.3,443.2 583.4,444.6 580.6,446.1 578.1,447.6 575.7,449.2 573.5,450.9 571.6,452.5 569.9,454.3 568.4,456.0 567.1,457.8 566.0,459.6 565.2,461.4 564.6,463.3 564.3,465.1 564.2,467.0 564.4,468.8 564.7,470.7 565.4,472.5 566.2,474.4 567.3,476.2 568.6,477.9 570.2,479.7 543.5,492.7 349.6,429.6" fill="none" stroke="#283030" stroke-width="0.8" stroke-opacity="0.7"/>
<polygon points="572.6,265.7 767.0,329.0 768.1,330.8 768.9,332.7 769.5,334.6 770.0,336.6 770.2,338.5 770.1,340.4 769.9,342.3 769.4,344.3 768.8,346.2 767.9,348.0 766.7,349.9 765.4,351.8 763.9,353.6 762.2,355.4 760.2,357.1 758.1,358.9 755.8,360.5 753.2,362.2 750.5,363.8 747.7,365.3 744.6,366.8 741.4,368.2 738.0,369.5 734.5,370.8 730.8,372.0 727.0,373.2 723.1,374.3 719.1,375.3 714.9,376.2 710.7,377.1 706.3,377.8 701.9,378.5 697.4,379.1 692.8,379.6 688.2,380.0 683.5,380.4 678.8,380.6 674.1,380.8 669.4,380.9 664.6,380.9 660.2,380.7 655.7,380.6 651.1,380.5 646.5,380.6 642.0,380.7 637.4,381.0 632.9,381.3 628.5,381.8 624.1,382.3 619.8,383.0 615.6,383.7 611.5,384.5 607.5,385.4 603.6,386.4 599.8,387.4 596.2,388.6 592.8,389.8 589.5,391.1 586.3,392.4 583.4,393.8 580.6,395.3 578.1,396.8 575.7,398.4 573.5,400.1 571.6,401.7 569.9,403.5 568.4,405.2 567.1,407.0 566.0,408.8 565.2,410.6 564.6,412.5 564.3,414.3 564.2,416.2 564.4,418.0 564.7,419.9 565.4,421.7 566.2,423.6 567.3,425.4 568.6,427.1 570.2,428.9 543.5,441.9 349.6,378.8" fill="none" stroke="#283030" stroke-width="0.8" stroke-opacity="0.7"/>
<polygon points="572.6,214.9 767.0,278.2 768.1,280.0 768.9,281.9 769.5,283.8 770.0,285.8 770.2,287.7 770.1,289.6 769.9,291.5 769.4,293.5 768.8,295.4 767.9,297.2 766.7,299.1 765.4,301.0 763.9,302.8 762.2,304.6 760.2,306.3 758.1,308.1 755.8,309.7 753.2,311.4 750.5,313.0 747.7,314.5 744.6,316.0 741.4,317.4 738.0,318.7 734.5,320.0 730.8,321.2 727.0,322.4 723.1,323.5 719.1,324.5 714.9,325.4 710.7,326.3 706.3,327.0 701.9,327.7 697.4,328.3 692.8,328.8 688.2,329.2 683.5,329.6 678.8,329.8 674.1,330.0 669.4,330.1 664.6,330.1 660.2,329.9 655.7,329.8 651.1,329.7 646.5,329.8 642.0,329.9 637.4,330.2 632.9,330.5 628.5,331.0 624.1,331.5 619.8,332.2 615.6,332.9 611.5,333.7 607.5,334.6 603.6,335.6 599.8,336.6 596.2,337.8 592.8,339.0 589.5,340.3 586.3,341.6 583.4,343.0 580.6,344.5 578.1,346.0 575.7,347.6 573.5,349.3 571.6,350.9 569.9,352.7 568.4,354.4 567.1,356.2 566.0,358.0 565.2,359.8 564.6,361.7 564.3,363.5 564.2,365.4 564.4,367.2 564.7,369.1 565.4,370.9 566.2,372.8 567.3,374.6 568.6,376.3 570.2,378.1 543.5,391.1 349.6,328.0" fill="none" stroke="#283030" stroke-width="0.8" stroke-opacity="0.7"/>
<polygon points="572.6,164.1 767.0,227.4 768.1,229.2 768.9,231.1 769.5,233.0 770.0,235.0 770.2,236.9 770.1,238.8 769.9,240.7 769.4,242.7 768.8,244.6 767.9,246.4 766.7,248.3 765.4,250.2 763.9,252.0 762.2,253.8 760.2,255.5 758.1,257.3 755.8,258.9 753.2,260.6 750.5,262.2 747.7,263.7 744.6,265.2 741.4,266.6 738.0,267.9 734.5,269.2 730.8,270.4 727.0,271.6 723.1,272.7 719.1,273.7 714.9,274.6 710.7,275.5 706.3,276.2 701.9,276.9 697.4,277.5 692.8,278.0 688.2,278.4 683.5,278.8 678.8,279.0 674.1,279.2 669.4,279.3 664.6,279.3 660.2,279.1 655.7,279.0 651.1,278.9 646.5,279.0 642.0,279.1 637.4,279.4 632.9,279.7 628.5,280.2 624.1,280.7 619.8,281.4 615.6,282.1 611.5,282.9 607.5,283.8 603.6,284.8 599.8,285.8 596.2,287.0 592.8,288.2 589.5,289.5 586.3,290.8 583.4,292.2 580.6,293.7 578.1,295.2 575.7,296.8 573.5,298.5 571.6,300.1 569.9,301.9 568.4,303.6 567.1,305.4 566.0,307.2 565.2,309.0 564.6,310.9 564.3,312.7 564.2,314.6 564.4,316.4 564.7,318.3 565.4,320.1 566.2,322.0 567.3,323.8 568.6,325.5 570.2,327.3 543.5,340.3 349.6,277.2" fill="none" stroke="#283030" stroke-width="0.8" stroke-opacity="0.7"/>
<polygon points="572.6,113.3 767.0,176.6 768.1,178.4 768.9,180.3 769.5,182.2 770.0,184.2 770.2,186.1 770.1,188.0 769.9,189.9 769.4,191.9 768.8,193.8 767.9,195.6 766.7,197.5 765.4,199.4 763.9,201.2 762.2,203.0 760.2,204.7 758.1,206.5 755.8,208.1 753.2,209.8 750.5,211.4 747.7,212.9 744.6,214.4 741.4,215.8 738.0,217.1 734.5,218.4 730.8,219.6 727.0,220.8 723.1,221.9 719.1,222.9 714.9,223.8 710.7,224.7 706.3,225.4 701.9,226.1 697.4,226.7 692.8,227.2 688.2,227.6 683.5,228.0 678.8,228.2 674.1,228.4 669.4,228.5 664.6,228.5 660.2,228.3 655.7,228.2 651.1,228.1 646.5,228.2 642.0,228.3 637.4,228.6 632.9,228.9 628.5,229.4 624.1,229.9 619.8,230.6 615.6,231.3 611.5,232.1 607.5,233.0 603.6,234.0 599.8,235.0 596.2,236.2 592.8,237.4 589.5,238.7 586.3,240.0 583.4,241.4 580.6,242.9 578.1,244.4 575.7,246.0 573.5,247.7 571.6,249.3 569.9,251.1 568.4,252.8 567.1,254.6 566.0,256.4 565.2,258.2 564.6,260.1 564.3,261.9 564.2,263.8 564.4,265.6 564.7,267.5 565.4,269.3 566.2,271.2 567.3,273.0 568.6,274.7 570.2,276.5 543.5,289.5 349.6,226.4" fill="none" stroke="#283030" stroke-width="0.8" stroke-opacity="0.7"/>
<polygon points="572.6,62.5 745.5,118.8 746.6,120.7 747.4,122.6 748.1,124.5 748.5,126.4 748.7,128.3 748.7,130.2 748.4,132.2 748.0,134.1 747.3,136.0 746.4,137.9 745.3,139.7 744.0,141.6 742.4,143.4 740.7,145.2 738.8,147.0 736.6,148.7 734.3,150.4 731.8,152.0 729.1,153.6 726.2,155.1 723.1,156.6 719.9,158.0 716.6,159.3 713.0,160.6 709.4,161.9 705.6,163.0 701.6,164.1 697.6,165.1 693.4,166.0 689.2,166.9 684.8,167.6 680.4,168.3 675.9,168.9 671.3,169.4 666.7,169.9 662.1,170.2 657.4,170.5 652.6,170.6 647.9,170.7 643.2,170.7 639.2,170.4 634.3,170.2 629.5,170.1 624.6,170.2 619.8,170.3 614.9,170.6 610.2,170.9 605.5,171.4 600.8,172.0 596.3,172.8 591.9,173.6 587.6,174.5 583.4,175.5 579.4,176.6 575.6,177.8 571.9,179.2 568.5,180.5 565.2,182.0 562.2,183.5 559.3,185.2 556.8,186.8 554.4,188.6 552.4,190.3 550.5,192.2 549.0,194.0 547.7,196.0 546.7,197.9 546.0,199.8 545.5,201.8 545.4,203.8 545.5,205.8 545.9,207.7 546.6,209.7 547.6,211.6 548.8,213.5 550.3,215.4 552.1,217.2 554.2,219.0 556.5,220.8 559.0,222.4 532.4,235.6 348.9,175.9" fill="none" stroke="#283030" stroke-width="0.8" stroke-opacity="0.7"/>
<polygon points="572.6,11.7 702.3,53.9 589.9,110.9 460.2,68.7" fill="none" stroke="#283030" stroke-width="0.8" stroke-opacity="0.7"/>
<ellipse cx="574.7" cy="324.4" rx="2.6" ry="1.6" fill="#e03040" fill-opacity="0.55"/><rect x="573.5" y="323.8" width="2.4" height="1.2" fill="#ff2020" fill-opacity="0.5"/>
<ellipse cx="574.7" cy="273.6" rx="2.6" ry="1.6" fill="#e03040" fill-opacity="0.55"/><rect x="573.5" y="273.0" width="2.4" height="1.2" fill="#ff2020" fill-opacity="0.5"/>
<ellipse cx="574.7" cy="222.8" rx="2.6" ry="1.6" fill="#e03040" fill-opacity="0.55"/><rect x="573.5" y="222.2" width="2.4" height="1.2" fill="#ff2020" fill-opacity="0.5"/>
<ellipse cx="574.7" cy="172.0" rx="2.6" ry="1.6" fill="#e03040" fill-opacity="0.55"/><rect x="573.5" y="171.4" width="2.4" height="1.2" fill="#ff2020" fill-opacity="0.5"/>
<ellipse cx="574.7" cy="121.2" rx="2.6" ry="1.6" fill="#e03040" fill-opacity="0.55"/><rect x="573.5" y="120.6" width="2.4" height="1.2" fill="#ff2020" fill-opacity="0.5"/>
<ellipse cx="574.7" cy="70.4" rx="2.6" ry="1.6" fill="#e03040" fill-opacity="0.55"/><rect x="573.5" y="69.8" width="2.4" height="1.2" fill="#ff2020" fill-opacity="0.5"/>
<rect x="572.4" y="18.5" width="4.6" height="3.2" fill="#ff0000" fill-opacity="1.0"/>
<ellipse cx="522.5" cy="350.8" rx="2.6" ry="1.6" fill="#e03040" fill-opacity="0.55"/><rect x="521.3" y="350.2" width="2.4" height="1.2" fill="#ff2020" fill-opacity="0.5"/>
<ellipse cx="522.5" cy="300.0" rx="2.6" ry="1.6" fill="#e03040" fill-opacity="0.55"/><rect x="521.3" y="299.4" width="2.4" height="1.2" fill="#ff2020" fill-opacity="0.5"/>
<ellipse cx="522.5" cy="249.2" rx="2.6" ry="1.6" fill="#e03040" fill-opacity="0.55"/><rect x="521.3" y="248.6" width="2.4" height="1.2" fill="#ff2020" fill-opacity="0.5"/>
<ellipse cx="522.5" cy="198.4" rx="2.6" ry="1.6" fill="#e03040" fill-opacity="0.55"/><rect x="521.3" y="197.8" width="2.4" height="1.2" fill="#ff2020" fill-opacity="0.5"/>
<ellipse cx="522.5" cy="147.6" rx="2.6" ry="1.6" fill="#e03040" fill-opacity="0.55"/><rect x="521.3" y="147.0" width="2.4" height="1.2" fill="#ff2020" fill-opacity="0.5"/>
<ellipse cx="522.5" cy="96.8" rx="2.6" ry="1.6" fill="#e03040" fill-opacity="0.55"/><rect x="521.3" y="96.2" width="2.4" height="1.2" fill="#ff2020" fill-opacity="0.5"/>
<rect x="520.2" y="44.9" width="4.6" height="3.2" fill="#ff0000" fill-opacity="1.0"/>
<ellipse cx="479.6" cy="372.6" rx="2.6" ry="1.6" fill="#e03040" fill-opacity="0.55"/><rect x="478.4" y="372.0" width="2.4" height="1.2" fill="#ff2020" fill-opacity="0.5"/>
<ellipse cx="479.6" cy="321.8" rx="2.6" ry="1.6" fill="#e03040" fill-opacity="0.55"/><rect x="478.4" y="321.2" width="2.4" height="1.2" fill="#ff2020" fill-opacity="0.5"/>
<ellipse cx="479.6" cy="271.0" rx="2.6" ry="1.6" fill="#e03040" fill-opacity="0.55"/><rect x="478.4" y="270.4" width="2.4" height="1.2" fill="#ff2020" fill-opacity="0.5"/>
<ellipse cx="479.6" cy="220.2" rx="2.6" ry="1.6" fill="#e03040" fill-opacity="0.55"/><rect x="478.4" y="219.6" width="2.4" height="1.2" fill="#ff2020" fill-opacity="0.5"/>
<ellipse cx="479.6" cy="169.4" rx="2.6" ry="1.6" fill="#e03040" fill-opacity="0.55"/><rect x="478.4" y="168.8" width="2.4" height="1.2" fill="#ff2020" fill-opacity="0.5"/>
<ellipse cx="479.6" cy="118.6" rx="2.6" ry="1.6" fill="#e03040" fill-opacity="0.55"/><rect x="478.4" y="118.0" width="2.4" height="1.2" fill="#ff2020" fill-opacity="0.5"/>
<rect x="477.3" y="66.7" width="4.6" height="3.2" fill="#ff0000" fill-opacity="1.0"/>
<ellipse cx="436.7" cy="394.2" rx="2.6" ry="1.6" fill="#e03040" fill-opacity="0.55"/><rect x="435.5" y="393.6" width="2.4" height="1.2" fill="#ff2020" fill-opacity="0.5"/>
<ellipse cx="436.7" cy="343.4" rx="2.6" ry="1.6" fill="#e03040" fill-opacity="0.55"/><rect x="435.5" y="342.8" width="2.4" height="1.2" fill="#ff2020" fill-opacity="0.5"/>
<ellipse cx="436.7" cy="292.6" rx="2.6" ry="1.6" fill="#e03040" fill-opacity="0.55"/><rect x="435.5" y="292.0" width="2.4" height="1.2" fill="#ff2020" fill-opacity="0.5"/>
<ellipse cx="436.7" cy="241.8" rx="2.6" ry="1.6" fill="#e03040" fill-opacity="0.55"/><rect x="435.5" y="241.2" width="2.4" height="1.2" fill="#ff2020" fill-opacity="0.5"/>
<ellipse cx="436.7" cy="191.0" rx="2.6" ry="1.6" fill="#e03040" fill-opacity="0.55"/><rect x="435.5" y="190.4" width="2.4" height="1.2" fill="#ff2020" fill-opacity="0.5"/>
<rect x="434.4" y="139.1" width="4.6" height="3.2" fill="#ff0000" fill-opacity="1.0"/>
<ellipse cx="394.1" cy="415.7" rx="2.6" ry="1.6" fill="#e03040" fill-opacity="0.55"/><rect x="392.9" y="415.1" width="2.4" height="1.2" fill="#ff2020" fill-opacity="0.5"/>
<ellipse cx="394.1" cy="364.9" rx="2.6" ry="1.6" fill="#e03040" fill-opacity="0.55"/><rect x="392.9" y="364.3" width="2.4" height="1.2" fill="#ff2020" fill-opacity="0.5"/>
<ellipse cx="394.1" cy="314.1" rx="2.6" ry="1.6" fill="#e03040" fill-opacity="0.55"/><rect x="392.9" y="313.5" width="2.4" height="1.2" fill="#ff2020" fill-opacity="0.5"/>
<ellipse cx="394.1" cy="263.3" rx="2.6" ry="1.6" fill="#e03040" fill-opacity="0.55"/><rect x="392.9" y="262.7" width="2.4" height="1.2" fill="#ff2020" fill-opacity="0.5"/>
<ellipse cx="394.1" cy="212.5" rx="2.6" ry="1.6" fill="#e03040" fill-opacity="0.55"/><rect x="392.9" y="211.9" width="2.4" height="1.2" fill="#ff2020" fill-opacity="0.5"/>
<rect x="391.8" y="160.6" width="4.6" height="3.2" fill="#ff0000" fill-opacity="1.0"/>
<ellipse cx="367.5" cy="429.4" rx="2.6" ry="1.6" fill="#e03040" fill-opacity="0.55"/><rect x="366.3" y="428.8" width="2.4" height="1.2" fill="#ff2020" fill-opacity="0.5"/>
<ellipse cx="367.5" cy="378.6" rx="2.6" ry="1.6" fill="#e03040" fill-opacity="0.55"/><rect x="366.3" y="378.0" width="2.4" height="1.2" fill="#ff2020" fill-opacity="0.5"/>
<ellipse cx="367.5" cy="327.8" rx="2.6" ry="1.6" fill="#e03040" fill-opacity="0.55"/><rect x="366.3" y="327.2" width="2.4" height="1.2" fill="#ff2020" fill-opacity="0.5"/>
<ellipse cx="367.5" cy="277.0" rx="2.6" ry="1.6" fill="#e03040" fill-opacity="0.55"/><rect x="366.3" y="276.4" width="2.4" height="1.2" fill="#ff2020" fill-opacity="0.5"/>
<ellipse cx="367.5" cy="226.2" rx="2.6" ry="1.6" fill="#e03040" fill-opacity="0.55"/><rect x="366.3" y="225.6" width="2.4" height="1.2" fill="#ff2020" fill-opacity="0.5"/>
<rect x="365.2" y="174.3" width="4.6" height="3.2" fill="#ff0000" fill-opacity="1.0"/>
<ellipse cx="533.9" cy="389.6" rx="2.6" ry="1.6" fill="#e03040" fill-opacity="0.55"/><rect x="532.7" y="389.0" width="2.4" height="1.2" fill="#ff2020" fill-opacity="0.5"/>
<ellipse cx="533.9" cy="338.8" rx="2.6" ry="1.6" fill="#e03040" fill-opacity="0.55"/><rect x="532.7" y="338.2" width="2.4" height="1.2" fill="#ff2020" fill-opacity="0.5"/>
<ellipse cx="533.9" cy="288.0" rx="2.6" ry="1.6" fill="#e03040" fill-opacity="0.55"/><rect x="532.7" y="287.4" width="2.4" height="1.2" fill="#ff2020" fill-opacity="0.5"/>
<ellipse cx="533.9" cy="237.2" rx="2.6" ry="1.6" fill="#e03040" fill-opacity="0.55"/><rect x="532.7" y="236.6" width="2.4" height="1.2" fill="#ff2020" fill-opacity="0.5"/>
<ellipse cx="533.9" cy="186.4" rx="2.6" ry="1.6" fill="#e03040" fill-opacity="0.55"/><rect x="532.7" y="185.8" width="2.4" height="1.2" fill="#ff2020" fill-opacity="0.5"/>
<ellipse cx="533.9" cy="135.6" rx="2.6" ry="1.6" fill="#e03040" fill-opacity="0.55"/><rect x="532.7" y="135.0" width="2.4" height="1.2" fill="#ff2020" fill-opacity="0.5"/>
<rect x="531.6" y="83.7" width="4.6" height="3.2" fill="#ff0000" fill-opacity="1.0"/>
<ellipse cx="490.2" cy="411.2" rx="2.6" ry="1.6" fill="#e03040" fill-opacity="0.55"/><rect x="489.0" y="410.6" width="2.4" height="1.2" fill="#ff2020" fill-opacity="0.5"/>
<ellipse cx="490.2" cy="360.4" rx="2.6" ry="1.6" fill="#e03040" fill-opacity="0.55"/><rect x="489.0" y="359.8" width="2.4" height="1.2" fill="#ff2020" fill-opacity="0.5"/>
<ellipse cx="490.2" cy="309.6" rx="2.6" ry="1.6" fill="#e03040" fill-opacity="0.55"/><rect x="489.0" y="309.0" width="2.4" height="1.2" fill="#ff2020" fill-opacity="0.5"/>
<ellipse cx="490.2" cy="258.8" rx="2.6" ry="1.6" fill="#e03040" fill-opacity="0.55"/><rect x="489.0" y="258.2" width="2.4" height="1.2" fill="#ff2020" fill-opacity="0.5"/>
<ellipse cx="490.2" cy="208.0" rx="2.6" ry="1.6" fill="#e03040" fill-opacity="0.55"/><rect x="489.0" y="207.4" width="2.4" height="1.2" fill="#ff2020" fill-opacity="0.5"/>
<rect x="487.9" y="156.1" width="4.6" height="3.2" fill="#ff0000" fill-opacity="1.0"/>
<ellipse cx="421.6" cy="446.6" rx="2.6" ry="1.6" fill="#e03040" fill-opacity="0.55"/><rect x="420.4" y="446.0" width="2.4" height="1.2" fill="#ff2020" fill-opacity="0.5"/>
<ellipse cx="421.6" cy="395.8" rx="2.6" ry="1.6" fill="#e03040" fill-opacity="0.55"/><rect x="420.4" y="395.2" width="2.4" height="1.2" fill="#ff2020" fill-opacity="0.5"/>
<ellipse cx="421.6" cy="345.0" rx="2.6" ry="1.6" fill="#e03040" fill-opacity="0.55"/><rect x="420.4" y="344.4" width="2.4" height="1.2" fill="#ff2020" fill-opacity="0.5"/>
<ellipse cx="421.6" cy="294.2" rx="2.6" ry="1.6" fill="#e03040" fill-opacity="0.55"/><rect x="420.4" y="293.6" width="2.4" height="1.2" fill="#ff2020" fill-opacity="0.5"/>
<ellipse cx="421.6" cy="243.4" rx="2.6" ry="1.6" fill="#e03040" fill-opacity="0.55"/><rect x="420.4" y="242.8" width="2.4" height="1.2" fill="#ff2020" fill-opacity="0.5"/>
<rect x="419.3" y="191.5" width="4.6" height="3.2" fill="#ff0000" fill-opacity="1.0"/>
<ellipse cx="682.9" cy="359.3" rx="2.6" ry="1.6" fill="#e03040" fill-opacity="0.55"/><rect x="681.7" y="358.7" width="2.4" height="1.2" fill="#ff2020" fill-opacity="0.5"/>
<ellipse cx="682.9" cy="308.5" rx="2.6" ry="1.6" fill="#e03040" fill-opacity="0.55"/><rect x="681.7" y="307.9" width="2.4" height="1.2" fill="#ff2020" fill-opacity="0.5"/>
<ellipse cx="682.9" cy="257.7" rx="2.6" ry="1.6" fill="#e03040" fill-opacity="0.55"/><rect x="681.7" y="257.1" width="2.4" height="1.2" fill="#ff2020" fill-opacity="0.5"/>
<ellipse cx="682.9" cy="206.9" rx="2.6" ry="1.6" fill="#e03040" fill-opacity="0.55"/><rect x="681.7" y="206.3" width="2.4" height="1.2" fill="#ff2020" fill-opacity="0.5"/>
<ellipse cx="682.9" cy="156.1" rx="2.6" ry="1.6" fill="#e03040" fill-opacity="0.55"/><rect x="681.7" y="155.5" width="2.4" height="1.2" fill="#ff2020" fill-opacity="0.5"/>
<ellipse cx="682.9" cy="105.3" rx="2.6" ry="1.6" fill="#e03040" fill-opacity="0.55"/><rect x="681.7" y="104.7" width="2.4" height="1.2" fill="#ff2020" fill-opacity="0.5"/>
<rect x="680.6" y="53.4" width="4.6" height="3.2" fill="#ff0000" fill-opacity="1.0"/>
<ellipse cx="631.4" cy="386.4" rx="2.6" ry="1.6" fill="#e03040" fill-opacity="0.55"/><rect x="630.2" y="385.8" width="2.4" height="1.2" fill="#ff2020" fill-opacity="0.5"/>
<ellipse cx="631.4" cy="335.6" rx="2.6" ry="1.6" fill="#e03040" fill-opacity="0.55"/><rect x="630.2" y="335.0" width="2.4" height="1.2" fill="#ff2020" fill-opacity="0.5"/>
<ellipse cx="631.4" cy="284.8" rx="2.6" ry="1.6" fill="#e03040" fill-opacity="0.55"/><rect x="630.2" y="284.2" width="2.4" height="1.2" fill="#ff2020" fill-opacity="0.5"/>
<ellipse cx="631.4" cy="234.0" rx="2.6" ry="1.6" fill="#e03040" fill-opacity="0.55"/><rect x="630.2" y="233.4" width="2.4" height="1.2" fill="#ff2020" fill-opacity="0.5"/>
<ellipse cx="631.4" cy="183.2" rx="2.6" ry="1.6" fill="#e03040" fill-opacity="0.55"/><rect x="630.2" y="182.6" width="2.4" height="1.2" fill="#ff2020" fill-opacity="0.5"/>
<ellipse cx="631.4" cy="132.4" rx="2.6" ry="1.6" fill="#e03040" fill-opacity="0.55"/><rect x="630.2" y="131.8" width="2.4" height="1.2" fill="#ff2020" fill-opacity="0.5"/>
<rect x="629.1" y="80.5" width="4.6" height="3.2" fill="#ff0000" fill-opacity="1.0"/>
<ellipse cx="587.8" cy="408.5" rx="2.6" ry="1.6" fill="#e03040" fill-opacity="0.55"/><rect x="586.6" y="407.9" width="2.4" height="1.2" fill="#ff2020" fill-opacity="0.5"/>
<ellipse cx="587.8" cy="357.7" rx="2.6" ry="1.6" fill="#e03040" fill-opacity="0.55"/><rect x="586.6" y="357.1" width="2.4" height="1.2" fill="#ff2020" fill-opacity="0.5"/>
<ellipse cx="587.8" cy="306.9" rx="2.6" ry="1.6" fill="#e03040" fill-opacity="0.55"/><rect x="586.6" y="306.3" width="2.4" height="1.2" fill="#ff2020" fill-opacity="0.5"/>
<ellipse cx="587.8" cy="256.1" rx="2.6" ry="1.6" fill="#e03040" fill-opacity="0.55"/><rect x="586.6" y="255.5" width="2.4" height="1.2" fill="#ff2020" fill-opacity="0.5"/>
<ellipse cx="587.8" cy="205.3" rx="2.6" ry="1.6" fill="#e03040" fill-opacity="0.55"/><rect x="586.6" y="204.7" width="2.4" height="1.2" fill="#ff2020" fill-opacity="0.5"/>
<ellipse cx="587.8" cy="154.5" rx="2.6" ry="1.6" fill="#e03040" fill-opacity="0.55"/><rect x="586.6" y="153.9" width="2.4" height="1.2" fill="#ff2020" fill-opacity="0.5"/>
<rect x="585.5" y="102.6" width="4.6" height="3.2" fill="#ff0000" fill-opacity="1.0"/>
<ellipse cx="476.1" cy="464.6" rx="2.6" ry="1.6" fill="#e03040" fill-opacity="0.55"/><rect x="474.9" y="464.0" width="2.4" height="1.2" fill="#ff2020" fill-opacity="0.5"/>
<ellipse cx="476.1" cy="413.8" rx="2.6" ry="1.6" fill="#e03040" fill-opacity="0.55"/><rect x="474.9" y="413.2" width="2.4" height="1.2" fill="#ff2020" fill-opacity="0.5"/>
<ellipse cx="476.1" cy="363.0" rx="2.6" ry="1.6" fill="#e03040" fill-opacity="0.55"/><rect x="474.9" y="362.4" width="2.4" height="1.2" fill="#ff2020" fill-opacity="0.5"/>
<ellipse cx="476.1" cy="312.2" rx="2.6" ry="1.6" fill="#e03040" fill-opacity="0.55"/><rect x="474.9" y="311.6" width="2.4" height="1.2" fill="#ff2020" fill-opacity="0.5"/>
<ellipse cx="476.1" cy="261.4" rx="2.6" ry="1.6" fill="#e03040" fill-opacity="0.55"/><rect x="474.9" y="260.8" width="2.4" height="1.2" fill="#ff2020" fill-opacity="0.5"/>
<rect x="473.8" y="209.5" width="4.6" height="3.2" fill="#ff0000" fill-opacity="1.0"/>
<ellipse cx="530.2" cy="481.7" rx="2.6" ry="1.6" fill="#e03040" fill-opacity="0.55"/><rect x="529.0" y="481.1" width="2.4" height="1.2" fill="#ff2020" fill-opacity="0.5"/>
<ellipse cx="530.2" cy="430.9" rx="2.6" ry="1.6" fill="#e03040" fill-opacity="0.55"/><rect x="529.0" y="430.3" width="2.4" height="1.2" fill="#ff2020" fill-opacity="0.5"/>
<ellipse cx="530.2" cy="380.1" rx="2.6" ry="1.6" fill="#e03040" fill-opacity="0.55"/><rect x="529.0" y="379.5" width="2.4" height="1.2" fill="#ff2020" fill-opacity="0.5"/>
<ellipse cx="530.2" cy="329.3" rx="2.6" ry="1.6" fill="#e03040" fill-opacity="0.55"/><rect x="529.0" y="328.7" width="2.4" height="1.2" fill="#ff2020" fill-opacity="0.5"/>
<ellipse cx="530.2" cy="278.5" rx="2.6" ry="1.6" fill="#e03040" fill-opacity="0.55"/><rect x="529.0" y="277.9" width="2.4" height="1.2" fill="#ff2020" fill-opacity="0.5"/>
<rect x="527.9" y="226.6" width="4.6" height="3.2" fill="#ff0000" fill-opacity="1.0"/>
<ellipse cx="545.2" cy="465.4" rx="2.6" ry="1.6" fill="#e03040" fill-opacity="0.55"/><rect x="544.0" y="464.8" width="2.4" height="1.2" fill="#ff2020" fill-opacity="0.5"/>
<ellipse cx="545.2" cy="414.6" rx="2.6" ry="1.6" fill="#e03040" fill-opacity="0.55"/><rect x="544.0" y="414.0" width="2.4" height="1.2" fill="#ff2020" fill-opacity="0.5"/>
<ellipse cx="545.2" cy="363.8" rx="2.6" ry="1.6" fill="#e03040" fill-opacity="0.55"/><rect x="544.0" y="363.2" width="2.4" height="1.2" fill="#ff2020" fill-opacity="0.5"/>
<ellipse cx="545.2" cy="313.0" rx="2.6" ry="1.6" fill="#e03040" fill-opacity="0.55"/><rect x="544.0" y="312.4" width="2.4" height="1.2" fill="#ff2020" fill-opacity="0.5"/>
<ellipse cx="545.2" cy="262.2" rx="2.6" ry="1.6" fill="#e03040" fill-opacity="0.55"/><rect x="544.0" y="261.6" width="2.4" height="1.2" fill="#ff2020" fill-opacity="0.5"/>
<rect x="542.9" y="210.3" width="4.6" height="3.2" fill="#ff0000" fill-opacity="1.0"/>
<ellipse cx="560.6" cy="448.3" rx="2.6" ry="1.6" fill="#e03040" fill-opacity="0.55"/><rect x="559.4" y="447.7" width="2.4" height="1.2" fill="#ff2020" fill-opacity="0.5"/>
<ellipse cx="560.6" cy="397.5" rx="2.6" ry="1.6" fill="#e03040" fill-opacity="0.55"/><rect x="559.4" y="396.9" width="2.4" height="1.2" fill="#ff2020" fill-opacity="0.5"/>
<ellipse cx="560.6" cy="346.7" rx="2.6" ry="1.6" fill="#e03040" fill-opacity="0.55"/><rect x="559.4" y="346.1" width="2.4" height="1.2" fill="#ff2020" fill-opacity="0.5"/>
<ellipse cx="560.6" cy="295.9" rx="2.6" ry="1.6" fill="#e03040" fill-opacity="0.55"/><rect x="559.4" y="295.3" width="2.4" height="1.2" fill="#ff2020" fill-opacity="0.5"/>
<ellipse cx="560.6" cy="245.1" rx="2.6" ry="1.6" fill="#e03040" fill-opacity="0.55"/><rect x="559.4" y="244.5" width="2.4" height="1.2" fill="#ff2020" fill-opacity="0.5"/>
<rect x="558.3" y="193.2" width="4.6" height="3.2" fill="#ff0000" fill-opacity="1.0"/>
<ellipse cx="613.5" cy="430.8" rx="2.6" ry="1.6" fill="#e03040" fill-opacity="0.55"/><rect x="612.3" y="430.2" width="2.4" height="1.2" fill="#ff2020" fill-opacity="0.5"/>
<ellipse cx="613.5" cy="380.0" rx="2.6" ry="1.6" fill="#e03040" fill-opacity="0.55"/><rect x="612.3" y="379.4" width="2.4" height="1.2" fill="#ff2020" fill-opacity="0.5"/>
<ellipse cx="613.5" cy="329.2" rx="2.6" ry="1.6" fill="#e03040" fill-opacity="0.55"/><rect x="612.3" y="328.6" width="2.4" height="1.2" fill="#ff2020" fill-opacity="0.5"/>
<ellipse cx="613.5" cy="278.4" rx="2.6" ry="1.6" fill="#e03040" fill-opacity="0.55"/><rect x="612.3" y="277.8" width="2.4" height="1.2" fill="#ff2020" fill-opacity="0.5"/>
<ellipse cx="613.5" cy="227.6" rx="2.6" ry="1.6" fill="#e03040" fill-opacity="0.55"/><rect x="612.3" y="227.0" width="2.4" height="1.2" fill="#ff2020" fill-opacity="0.5"/>
<rect x="611.2" y="175.7" width="4.6" height="3.2" fill="#ff0000" fill-opacity="1.0"/>
<ellipse cx="750.0" cy="387.6" rx="2.6" ry="1.6" fill="#e03040" fill-opacity="0.55"/><rect x="748.8" y="387.0" width="2.4" height="1.2" fill="#ff2020" fill-opacity="0.5"/>
<ellipse cx="750.0" cy="336.8" rx="2.6" ry="1.6" fill="#e03040" fill-opacity="0.55"/><rect x="748.8" y="336.2" width="2.4" height="1.2" fill="#ff2020" fill-opacity="0.5"/>
<ellipse cx="750.0" cy="286.0" rx="2.6" ry="1.6" fill="#e03040" fill-opacity="0.55"/><rect x="748.8" y="285.4" width="2.4" height="1.2" fill="#ff2020" fill-opacity="0.5"/>
<ellipse cx="750.0" cy="235.2" rx="2.6" ry="1.6" fill="#e03040" fill-opacity="0.55"/><rect x="748.8" y="234.6" width="2.4" height="1.2" fill="#ff2020" fill-opacity="0.5"/>
<rect x="747.7" y="183.3" width="4.6" height="3.2" fill="#ff0000" fill-opacity="1.0"/>
<ellipse cx="737.5" cy="412.6" rx="2.6" ry="1.6" fill="#e03040" fill-opacity="0.55"/><rect x="736.3" y="412.0" width="2.4" height="1.2" fill="#ff2020" fill-opacity="0.5"/>
<ellipse cx="737.5" cy="361.8" rx="2.6" ry="1.6" fill="#e03040" fill-opacity="0.55"/><rect x="736.3" y="361.2" width="2.4" height="1.2" fill="#ff2020" fill-opacity="0.5"/>
<ellipse cx="737.5" cy="311.0" rx="2.6" ry="1.6" fill="#e03040" fill-opacity="0.55"/><rect x="736.3" y="310.4" width="2.4" height="1.2" fill="#ff2020" fill-opacity="0.5"/>
<ellipse cx="737.5" cy="260.2" rx="2.6" ry="1.6" fill="#e03040" fill-opacity="0.55"/><rect x="736.3" y="259.6" width="2.4" height="1.2" fill="#ff2020" fill-opacity="0.5"/>
<rect x="735.2" y="208.3" width="4.6" height="3.2" fill="#ff0000" fill-opacity="1.0"/>
<ellipse cx="672.8" cy="428.8" rx="2.6" ry="1.6" fill="#e03040" fill-opacity="0.55"/><rect x="671.6" y="428.2" width="2.4" height="1.2" fill="#ff2020" fill-opacity="0.5"/>
<ellipse cx="672.8" cy="378.0" rx="2.6" ry="1.6" fill="#e03040" fill-opacity="0.55"/><rect x="671.6" y="377.4" width="2.4" height="1.2" fill="#ff2020" fill-opacity="0.5"/>
<ellipse cx="672.8" cy="327.2" rx="2.6" ry="1.6" fill="#e03040" fill-opacity="0.55"/><rect x="671.6" y="326.6" width="2.4" height="1.2" fill="#ff2020" fill-opacity="0.5"/>
<ellipse cx="672.8" cy="276.4" rx="2.6" ry="1.6" fill="#e03040" fill-opacity="0.55"/><rect x="671.6" y="275.8" width="2.4" height="1.2" fill="#ff2020" fill-opacity="0.5"/>
<rect x="670.5" y="224.5" width="4.6" height="3.2" fill="#ff0000" fill-opacity="1.0"/>
<polyline points="609.3,396.0 583.3,409.2" fill="none" stroke="#18d818" stroke-width="5" stroke-dasharray="1.2 0.7" stroke-opacity="0.95"/><polyline points="609.3,396.9 583.3,410.1" fill="none" stroke="#35e035" stroke-width="4" stroke-opacity="0.5"/>
<polyline points="583.3,409.2 616.2,419.9" fill="none" stroke="#18d818" stroke-width="5" stroke-dasharray="1.2 0.7" stroke-opacity="0.95"/><polyline points="583.3,410.1 616.2,420.8" fill="none" stroke="#35e035" stroke-width="4" stroke-opacity="0.5"/>
<polygon points="609.3,393.4 583.3,406.6 583.3,51.0 609.3,37.8" fill="rgb(183,32,188)" fill-opacity="0.8"/>
<polygon points="642.2,404.1 589.8,430.7 589.8,75.1 642.2,48.5" fill="rgb(183,32,188)" fill-opacity="0.8"/>
<polygon points="583.3,406.6 616.2,417.3 616.2,61.7 583.3,51.0" fill="rgb(183,32,188)" fill-opacity="0.8"/>
<polygon points="708.6,431.9 708.5,433.7 708.2,435.4 707.6,437.1 706.8,438.9 705.8,440.6 704.5,442.3 703.0,443.9 701.2,445.5 699.3,447.1 697.1,448.6 694.7,450.0 692.0,451.5 689.2,452.8 686.3,454.1 683.1,455.3 679.8,456.4 676.3,457.4 672.7,458.4 668.9,459.3 665.1,460.1 661.1,460.8 657.0,461.4 652.9,461.9 648.7,462.3 648.7,157.5 652.9,157.1 657.0,156.6 661.1,156.0 665.1,155.3 668.9,154.5 672.7,153.6 676.3,152.6 679.8,151.6 683.1,150.5 686.3,149.3 689.2,148.0 692.0,146.7 694.7,145.2 697.1,143.8 699.3,142.3 701.2,140.7 703.0,139.1 704.5,137.5 705.8,135.8 706.8,134.1 707.6,132.3 708.2,130.6 708.5,128.9 708.6,127.1" fill="rgb(183,32,188)" fill-opacity="0.8"/>
<polygon points="510.2,497.1 511.1,495.4 512.2,493.8 513.4,492.1 514.8,490.5 516.3,488.9 518.0,487.3 519.8,485.8 521.8,484.3 524.0,482.8 526.3,481.4 528.7,480.0 531.3,478.6 534.0,477.3 536.8,476.0 539.8,474.8 542.8,473.7 546.0,472.5 549.3,471.5 552.7,470.5 556.2,469.5 559.8,468.6 563.5,467.8 567.2,467.0 571.0,466.3 571.0,161.5 567.2,162.2 563.5,163.0 559.8,163.8 556.2,164.7 552.7,165.7 549.3,166.7 546.0,167.7 542.8,168.9 539.8,170.0 536.8,171.2 534.0,172.5 531.3,173.8 528.7,175.2 526.3,176.6 524.0,178.0 521.8,179.5 519.8,181.0 518.0,182.5 516.3,184.1 514.8,185.7 513.4,187.3 512.2,189.0 511.1,190.6 510.2,192.3" fill="rgb(183,32,188)" fill-opacity="0.8"/>
<polygon points="435.2,472.7 510.2,497.1 510.2,192.3 435.2,167.9" fill="rgb(183,32,188)" fill-opacity="0.8"/>
<defs><linearGradient id="sh1" x1="0" x2="1" y1="0" y2="0"><stop offset="0" stop-color="#200030" stop-opacity="0"/><stop offset="1" stop-color="#200030" stop-opacity="0.2"/></linearGradient><linearGradient id="sh2" x1="0" x2="1" y1="0" y2="0"><stop offset="0" stop-color="#200030" stop-opacity="0.18"/><stop offset="1" stop-color="#200030" stop-opacity="0"/></linearGradient></defs>
<polygon points="583.3,406.6 616.2,417.3 616.2,61.7 583.3,51.0" fill="#300040" fill-opacity="0.13"/>
<polygon points="510.2,497.1 511.1,495.4 512.2,493.8 513.4,492.1 514.8,490.5 516.3,488.9 518.0,487.3 519.8,485.8 521.8,484.3 524.0,482.8 526.3,481.4 528.7,480.0 531.3,478.6 534.0,477.3 536.8,476.0 539.8,474.8 542.8,473.7 546.0,472.5 549.3,471.5 552.7,470.5 556.2,469.5 559.8,468.6 563.5,467.8 567.2,467.0 571.0,466.3 571.0,161.5 567.2,162.2 563.5,163.0 559.8,163.8 556.2,164.7 552.7,165.7 549.3,166.7 546.0,167.7 542.8,168.9 539.8,170.0 536.8,171.2 534.0,172.5 531.3,173.8 528.7,175.2 526.3,176.6 524.0,178.0 521.8,179.5 519.8,181.0 518.0,182.5 516.3,184.1 514.8,185.7 513.4,187.3 512.2,189.0 511.1,190.6 510.2,192.3" fill="url(#sh1)"/>
<polygon points="708.6,431.9 708.5,433.7 708.2,435.4 707.6,437.1 706.8,438.9 705.8,440.6 704.5,442.3 703.0,443.9 701.2,445.5 699.3,447.1 697.1,448.6 694.7,450.0 692.0,451.5 689.2,452.8 686.3,454.1 683.1,455.3 679.8,456.4 676.3,457.4 672.7,458.4 668.9,459.3 665.1,460.1 661.1,460.8 657.0,461.4 652.9,461.9 648.7,462.3 648.7,157.5 652.9,157.1 657.0,156.6 661.1,156.0 665.1,155.3 668.9,154.5 672.7,153.6 676.3,152.6 679.8,151.6 683.1,150.5 686.3,149.3 689.2,148.0 692.0,146.7 694.7,145.2 697.1,143.8 699.3,142.3 701.2,140.7 703.0,139.1 704.5,137.5 705.8,135.8 706.8,134.1 707.6,132.3 708.2,130.6 708.5,128.9 708.6,127.1" fill="url(#sh2)"/>
<polygon points="606.4,391.6 586.1,401.9 586.1,357.5 606.4,347.2" fill="none" stroke="#ff18ff" stroke-width="1.1" stroke-dasharray="9 3"/>
<polygon points="606.4,340.8 586.1,351.1 586.1,306.7 606.4,296.4" fill="none" stroke="#ff18ff" stroke-width="1.1" stroke-dasharray="9 3"/>
<polygon points="606.4,290.0 586.1,300.3 586.1,255.9 606.4,245.6" fill="none" stroke="#ff18ff" stroke-width="1.1" stroke-dasharray="9 3"/>
<polygon points="606.4,239.2 586.1,249.5 586.1,205.1 606.4,194.8" fill="none" stroke="#ff18ff" stroke-width="1.1" stroke-dasharray="9 3"/>
<polygon points="606.4,188.4 586.1,198.7 586.1,154.3 606.4,144.0" fill="none" stroke="#ff18ff" stroke-width="1.1" stroke-dasharray="9 3"/>
<polygon points="606.4,137.6 586.1,147.9 586.1,103.5 606.4,93.2" fill="none" stroke="#ff18ff" stroke-width="1.1" stroke-dasharray="9 3"/>
<polygon points="606.4,86.8 586.1,97.1 586.1,52.7 606.4,42.4" fill="none" stroke="#ff18ff" stroke-width="1.1" stroke-dasharray="9 3"/>
<line x1="609.3" y1="393.4" x2="609.3" y2="37.8" stroke="#ff10ff" stroke-width="1"/>
<line x1="583.3" y1="406.6" x2="583.3" y2="51.0" stroke="#ff10ff" stroke-width="1"/>
<polyline points="609.3,37.8 583.3,51.0" fill="none" stroke="#1a0a1a" stroke-width="0.9" stroke-opacity="0.85"/>
<polygon points="639.4,402.3 592.7,426.0 592.7,381.6 639.4,357.9" fill="none" stroke="#ff18ff" stroke-width="1.1" stroke-dasharray="9 3"/>
<polygon points="639.4,351.5 592.7,375.2 592.7,330.8 639.4,307.1" fill="none" stroke="#ff18ff" stroke-width="1.1" stroke-dasharray="9 3"/>
<polygon points="639.4,300.7 592.7,324.4 592.7,280.0 639.4,256.3" fill="none" stroke="#ff18ff" stroke-width="1.1" stroke-dasharray="9 3"/>
<polygon points="639.4,249.9 592.7,273.6 592.7,229.2 639.4,205.5" fill="none" stroke="#ff18ff" stroke-width="1.1" stroke-dasharray="9 3"/>
<polygon points="639.4,199.1 592.7,222.8 592.7,178.4 639.4,154.7" fill="none" stroke="#ff18ff" stroke-width="1.1" stroke-dasharray="9 3"/>
<polygon points="639.4,148.3 592.7,172.0 592.7,127.6 639.4,103.9" fill="none" stroke="#ff18ff" stroke-width="1.1" stroke-dasharray="9 3"/>
<polygon points="639.4,97.5 592.7,121.2 592.7,76.8 639.4,53.1" fill="none" stroke="#ff18ff" stroke-width="1.1" stroke-dasharray="9 3"/>
<line x1="642.2" y1="404.1" x2="642.2" y2="48.5" stroke="#ff10ff" stroke-width="1"/>
<line x1="589.8" y1="430.7" x2="589.8" y2="75.1" stroke="#ff10ff" stroke-width="1"/>
<polyline points="642.2,48.5 589.8,75.1" fill="none" stroke="#1a0a1a" stroke-width="0.9" stroke-opacity="0.85"/>
<polygon points="586.3,404.4 613.2,413.1 613.2,368.7 586.3,360.0" fill="none" stroke="#ff18ff" stroke-width="1.1" stroke-dasharray="9 3"/>
<polygon points="586.3,353.6 613.2,362.3 613.2,317.9 586.3,309.2" fill="none" stroke="#ff18ff" stroke-width="1.1" stroke-dasharray="9 3"/>
<polygon points="586.3,302.8 613.2,311.5 613.2,267.1 586.3,258.4" fill="none" stroke="#ff18ff" stroke-width="1.1" stroke-dasharray="9 3"/>
<polygon points="586.3,252.0 613.2,260.7 613.2,216.3 586.3,207.6" fill="none" stroke="#ff18ff" stroke-width="1.1" stroke-dasharray="9 3"/>
<polygon points="586.3,201.2 613.2,209.9 613.2,165.5 586.3,156.8" fill="none" stroke="#ff18ff" stroke-width="1.1" stroke-dasharray="9 3"/>
<polygon points="586.3,150.4 613.2,159.1 613.2,114.7 586.3,106.0" fill="none" stroke="#ff18ff" stroke-width="1.1" stroke-dasharray="9 3"/>
<polygon points="586.3,99.6 613.2,108.3 613.2,63.9 586.3,55.2" fill="none" stroke="#ff18ff" stroke-width="1.1" stroke-dasharray="9 3"/>
<line x1="583.3" y1="406.6" x2="583.3" y2="51.0" stroke="#ff10ff" stroke-width="1"/>
<line x1="616.2" y1="417.3" x2="616.2" y2="61.7" stroke="#ff10ff" stroke-width="1"/>
<polyline points="583.3,51.0 616.2,61.7" fill="none" stroke="#1a0a1a" stroke-width="0.9" stroke-opacity="0.85"/>
<polygon points="708.5,430.3 708.5,430.5 708.2,432.2 707.6,433.9 706.8,435.7 705.8,437.4 704.5,439.1 703.0,440.7 701.2,442.3 699.3,443.9 697.1,445.4 694.7,446.8 692.0,448.3 689.2,449.6 686.3,450.9 683.1,452.1 679.8,453.2 676.3,454.2 672.7,455.2 668.9,456.1 665.1,456.9 661.1,457.6 657.0,458.2 652.9,458.7 651.9,458.8 651.9,414.4 652.9,414.3 657.0,413.8 661.1,413.2 665.1,412.5 668.9,411.7 672.7,410.8 676.3,409.8 679.8,408.8 683.1,407.7 686.3,406.5 689.2,405.2 692.0,403.9 694.7,402.4 697.1,401.0 699.3,399.5 701.2,397.9 703.0,396.3 704.5,394.7 705.8,393.0 706.8,391.3 707.6,389.5 708.2,387.8 708.5,386.1 708.5,385.9" fill="none" stroke="#ff18ff" stroke-width="1.1" stroke-dasharray="9 3"/>
<polygon points="708.5,379.5 708.5,379.7 708.2,381.4 707.6,383.1 706.8,384.9 705.8,386.6 704.5,388.3 703.0,389.9 701.2,391.5 699.3,393.1 697.1,394.6 694.7,396.0 692.0,397.5 689.2,398.8 686.3,400.1 683.1,401.3 679.8,402.4 676.3,403.4 672.7,404.4 668.9,405.3 665.1,406.1 661.1,406.8 657.0,407.4 652.9,407.9 651.9,408.0 651.9,363.6 652.9,363.5 657.0,363.0 661.1,362.4 665.1,361.7 668.9,360.9 672.7,360.0 676.3,359.0 679.8,358.0 683.1,356.9 686.3,355.7 689.2,354.4 692.0,353.1 694.7,351.6 697.1,350.2 699.3,348.7 701.2,347.1 703.0,345.5 704.5,343.9 705.8,342.2 706.8,340.5 707.6,338.7 708.2,337.0 708.5,335.3 708.5,335.1" fill="none" stroke="#ff18ff" stroke-width="1.1" stroke-dasharray="9 3"/>
<polygon points="708.5,328.7 708.5,328.9 708.2,330.6 707.6,332.3 706.8,334.1 705.8,335.8 704.5,337.5 703.0,339.1 701.2,340.7 699.3,342.3 697.1,343.8 694.7,345.2 692.0,346.7 689.2,348.0 686.3,349.3 683.1,350.5 679.8,351.6 676.3,352.6 672.7,353.6 668.9,354.5 665.1,355.3 661.1,356.0 657.0,356.6 652.9,357.1 651.9,357.2 651.9,312.8 652.9,312.7 657.0,312.2 661.1,311.6 665.1,310.9 668.9,310.1 672.7,309.2 676.3,308.2 679.8,307.2 683.1,306.1 686.3,304.9 689.2,303.6 692.0,302.3 694.7,300.8 697.1,299.4 699.3,297.9 701.2,296.3 703.0,294.7 704.5,293.1 705.8,291.4 706.8,289.7 707.6,287.9 708.2,286.2 708.5,284.5 708.5,284.3" fill="none" stroke="#ff18ff" stroke-width="1.1" stroke-dasharray="9 3"/>
<polygon points="708.5,277.9 708.5,278.1 708.2,279.8 707.6,281.5 706.8,283.3 705.8,285.0 704.5,286.7 703.0,288.3 701.2,289.9 699.3,291.5 697.1,293.0 694.7,294.4 692.0,295.9 689.2,297.2 686.3,298.5 683.1,299.7 679.8,300.8 676.3,301.8 672.7,302.8 668.9,303.7 665.1,304.5 661.1,305.2 657.0,305.8 652.9,306.3 651.9,306.4 651.9,262.0 652.9,261.9 657.0,261.4 661.1,260.8 665.1,260.1 668.9,259.3 672.7,258.4 676.3,257.4 679.8,256.4 683.1,255.3 686.3,254.1 689.2,252.8 692.0,251.5 694.7,250.0 697.1,248.6 699.3,247.1 701.2,245.5 703.0,243.9 704.5,242.3 705.8,240.6 706.8,238.9 707.6,237.1 708.2,235.4 708.5,233.7 708.5,233.5" fill="none" stroke="#ff18ff" stroke-width="1.1" stroke-dasharray="9 3"/>
<polygon points="708.5,227.1 708.5,227.3 708.2,229.0 707.6,230.7 706.8,232.5 705.8,234.2 704.5,235.9 703.0,237.5 701.2,239.1 699.3,240.7 697.1,242.2 694.7,243.6 692.0,245.1 689.2,246.4 686.3,247.7 683.1,248.9 679.8,250.0 676.3,251.0 672.7,252.0 668.9,252.9 665.1,253.7 661.1,254.4 657.0,255.0 652.9,255.5 651.9,255.6 651.9,211.2 652.9,211.1 657.0,210.6 661.1,210.0 665.1,209.3 668.9,208.5 672.7,207.6 676.3,206.6 679.8,205.6 683.1,204.5 686.3,203.3 689.2,202.0 692.0,200.7 694.7,199.2 697.1,197.8 699.3,196.3 701.2,194.7 703.0,193.1 704.5,191.5 705.8,189.8 706.8,188.1 707.6,186.3 708.2,184.6 708.5,182.9 708.5,182.7" fill="none" stroke="#ff18ff" stroke-width="1.1" stroke-dasharray="9 3"/>
<polygon points="708.5,176.3 708.5,176.5 708.2,178.2 707.6,179.9 706.8,181.7 705.8,183.4 704.5,185.1 703.0,186.7 701.2,188.3 699.3,189.9 697.1,191.4 694.7,192.8 692.0,194.3 689.2,195.6 686.3,196.9 683.1,198.1 679.8,199.2 676.3,200.2 672.7,201.2 668.9,202.1 665.1,202.9 661.1,203.6 657.0,204.2 652.9,204.7 651.9,204.8 651.9,160.4 652.9,160.3 657.0,159.8 661.1,159.2 665.1,158.5 668.9,157.7 672.7,156.8 676.3,155.8 679.8,154.8 683.1,153.7 686.3,152.5 689.2,151.2 692.0,149.9 694.7,148.4 697.1,147.0 699.3,145.5 701.2,143.9 703.0,142.3 704.5,140.7 705.8,139.0 706.8,137.3 707.6,135.5 708.2,133.8 708.5,132.1 708.5,131.9" fill="none" stroke="#ff18ff" stroke-width="1.1" stroke-dasharray="9 3"/>
<line x1="708.6" y1="431.9" x2="708.6" y2="127.1" stroke="#ff10ff" stroke-width="1"/>
<line x1="648.7" y1="462.3" x2="648.7" y2="157.5" stroke="#ff10ff" stroke-width="1"/>
<polyline points="708.6,381.1 708.5,382.9 708.2,384.6 707.6,386.3 706.8,388.1 705.8,389.8 704.5,391.5 703.0,393.1 701.2,394.7 699.3,396.3 697.1,397.8 694.7,399.2 692.0,400.7 689.2,402.0 686.3,403.3 683.1,404.5 679.8,405.6 676.3,406.6 672.7,407.6 668.9,408.5 665.1,409.3 661.1,410.0 657.0,410.6 652.9,411.1 648.7,411.5" fill="none" stroke="#1a0a1a" stroke-width="0.9" stroke-opacity="0.85"/>
<polyline points="708.6,330.3 708.5,332.1 708.2,333.8 707.6,335.5 706.8,337.3 705.8,339.0 704.5,340.7 703.0,342.3 701.2,343.9 699.3,345.5 697.1,347.0 694.7,348.4 692.0,349.9 689.2,351.2 686.3,352.5 683.1,353.7 679.8,354.8 676.3,355.8 672.7,356.8 668.9,357.7 665.1,358.5 661.1,359.2 657.0,359.8 652.9,360.3 648.7,360.7" fill="none" stroke="#1a0a1a" stroke-width="0.9" stroke-opacity="0.85"/>
<polyline points="708.6,279.5 708.5,281.3 708.2,283.0 707.6,284.7 706.8,286.5 705.8,288.2 704.5,289.9 703.0,291.5 701.2,293.1 699.3,294.7 697.1,296.2 694.7,297.6 692.0,299.1 689.2,300.4 686.3,301.7 683.1,302.9 679.8,304.0 676.3,305.0 672.7,306.0 668.9,306.9 665.1,307.7 661.1,308.4 657.0,309.0 652.9,309.5 648.7,309.9" fill="none" stroke="#1a0a1a" stroke-width="0.9" stroke-opacity="0.85"/>
<polyline points="708.6,228.7 708.5,230.5 708.2,232.2 707.6,233.9 706.8,235.7 705.8,237.4 704.5,239.1 703.0,240.7 701.2,242.3 699.3,243.9 697.1,245.4 694.7,246.8 692.0,248.3 689.2,249.6 686.3,250.9 683.1,252.1 679.8,253.2 676.3,254.2 672.7,255.2 668.9,256.1 665.1,256.9 661.1,257.6 657.0,258.2 652.9,258.7 648.7,259.1" fill="none" stroke="#1a0a1a" stroke-width="0.9" stroke-opacity="0.85"/>
<polyline points="708.6,177.9 708.5,179.7 708.2,181.4 707.6,183.1 706.8,184.9 705.8,186.6 704.5,188.3 703.0,189.9 701.2,191.5 699.3,193.1 697.1,194.6 694.7,196.0 692.0,197.5 689.2,198.8 686.3,200.1 683.1,201.3 679.8,202.4 676.3,203.4 672.7,204.4 668.9,205.3 665.1,206.1 661.1,206.8 657.0,207.4 652.9,207.9 648.7,208.3" fill="none" stroke="#1a0a1a" stroke-width="0.9" stroke-opacity="0.85"/>
<polyline points="708.6,127.1 708.5,128.9 708.2,130.6 707.6,132.3 706.8,134.1 705.8,135.8 704.5,137.5 703.0,139.1 701.2,140.7 699.3,142.3 697.1,143.8 694.7,145.2 692.0,146.7 689.2,148.0 686.3,149.3 683.1,150.5 679.8,151.6 676.3,152.6 672.7,153.6 668.9,154.5 665.1,155.3 661.1,156.0 657.0,156.6 652.9,157.1 648.7,157.5" fill="none" stroke="#1a0a1a" stroke-width="0.9" stroke-opacity="0.85"/>
<polygon points="511.0,492.4 511.1,492.2 512.2,490.6 513.4,488.9 514.8,487.3 516.3,485.7 518.0,484.1 519.8,482.6 521.8,481.1 524.0,479.6 526.3,478.2 528.7,476.8 531.3,475.4 534.0,474.1 536.8,472.8 539.8,471.6 542.8,470.5 546.0,469.3 549.3,468.3 552.7,467.3 556.2,466.3 559.8,465.4 563.5,464.6 567.2,463.8 567.9,463.7 567.9,419.3 567.2,419.4 563.5,420.2 559.8,421.0 556.2,421.9 552.7,422.9 549.3,423.9 546.0,424.9 542.8,426.1 539.8,427.2 536.8,428.4 534.0,429.7 531.3,431.0 528.7,432.4 526.3,433.8 524.0,435.2 521.8,436.7 519.8,438.2 518.0,439.7 516.3,441.3 514.8,442.9 513.4,444.5 512.2,446.2 511.1,447.8 511.0,448.0" fill="none" stroke="#ff18ff" stroke-width="1.1" stroke-dasharray="9 3"/>
<polygon points="511.0,441.6 511.1,441.4 512.2,439.8 513.4,438.1 514.8,436.5 516.3,434.9 518.0,433.3 519.8,431.8 521.8,430.3 524.0,428.8 526.3,427.4 528.7,426.0 531.3,424.6 534.0,423.3 536.8,422.0 539.8,420.8 542.8,419.7 546.0,418.5 549.3,417.5 552.7,416.5 556.2,415.5 559.8,414.6 563.5,413.8 567.2,413.0 567.9,412.9 567.9,368.5 567.2,368.6 563.5,369.4 559.8,370.2 556.2,371.1 552.7,372.1 549.3,373.1 546.0,374.1 542.8,375.3 539.8,376.4 536.8,377.6 534.0,378.9 531.3,380.2 528.7,381.6 526.3,383.0 524.0,384.4 521.8,385.9 519.8,387.4 518.0,388.9 516.3,390.5 514.8,392.1 513.4,393.7 512.2,395.4 511.1,397.0 511.0,397.2" fill="none" stroke="#ff18ff" stroke-width="1.1" stroke-dasharray="9 3"/>
<polygon points="511.0,390.8 511.1,390.6 512.2,389.0 513.4,387.3 514.8,385.7 516.3,384.1 518.0,382.5 519.8,381.0 521.8,379.5 524.0,378.0 526.3,376.6 528.7,375.2 531.3,373.8 534.0,372.5 536.8,371.2 539.8,370.0 542.8,368.9 546.0,367.7 549.3,366.7 552.7,365.7 556.2,364.7 559.8,363.8 563.5,363.0 567.2,362.2 567.9,362.1 567.9,317.7 567.2,317.8 563.5,318.6 559.8,319.4 556.2,320.3 552.7,321.3 549.3,322.3 546.0,323.3 542.8,324.5 539.8,325.6 536.8,326.8 534.0,328.1 531.3,329.4 528.7,330.8 526.3,332.2 524.0,333.6 521.8,335.1 519.8,336.6 518.0,338.1 516.3,339.7 514.8,341.3 513.4,342.9 512.2,344.6 511.1,346.2 511.0,346.4" fill="none" stroke="#ff18ff" stroke-width="1.1" stroke-dasharray="9 3"/>
<polygon points="511.0,340.0 511.1,339.8 512.2,338.2 513.4,336.5 514.8,334.9 516.3,333.3 518.0,331.7 519.8,330.2 521.8,328.7 524.0,327.2 526.3,325.8 528.7,324.4 531.3,323.0 534.0,321.7 536.8,320.4 539.8,319.2 542.8,318.1 546.0,316.9 549.3,315.9 552.7,314.9 556.2,313.9 559.8,313.0 563.5,312.2 567.2,311.4 567.9,311.3 567.9,266.9 567.2,267.0 563.5,267.8 559.8,268.6 556.2,269.5 552.7,270.5 549.3,271.5 546.0,272.5 542.8,273.7 539.8,274.8 536.8,276.0 534.0,277.3 531.3,278.6 528.7,280.0 526.3,281.4 524.0,282.8 521.8,284.3 519.8,285.8 518.0,287.3 516.3,288.9 514.8,290.5 513.4,292.1 512.2,293.8 511.1,295.4 511.0,295.6" fill="none" stroke="#ff18ff" stroke-width="1.1" stroke-dasharray="9 3"/>
<polygon points="511.0,289.2 511.1,289.0 512.2,287.4 513.4,285.7 514.8,284.1 516.3,282.5 518.0,280.9 519.8,279.4 521.8,277.9 524.0,276.4 526.3,275.0 528.7,273.6 531.3,272.2 534.0,270.9 536.8,269.6 539.8,268.4 542.8,267.3 546.0,266.1 549.3,265.1 552.7,264.1 556.2,263.1 559.8,262.2 563.5,261.4 567.2,260.6 567.9,260.5 567.9,216.1 567.2,216.2 563.5,217.0 559.8,217.8 556.2,218.7 552.7,219.7 549.3,220.7 546.0,221.7 542.8,222.9 539.8,224.0 536.8,225.2 534.0,226.5 531.3,227.8 528.7,229.2 526.3,230.6 524.0,232.0 521.8,233.5 519.8,235.0 518.0,236.5 516.3,238.1 514.8,239.7 513.4,241.3 512.2,243.0 511.1,244.6 511.0,244.8" fill="none" stroke="#ff18ff" stroke-width="1.1" stroke-dasharray="9 3"/>
<polygon points="511.0,238.4 511.1,238.2 512.2,236.6 513.4,234.9 514.8,233.3 516.3,231.7 518.0,230.1 519.8,228.6 521.8,227.1 524.0,225.6 526.3,224.2 528.7,222.8 531.3,221.4 534.0,220.1 536.8,218.8 539.8,217.6 542.8,216.5 546.0,215.3 549.3,214.3 552.7,213.3 556.2,212.3 559.8,211.4 563.5,210.6 567.2,209.8 567.9,209.7 567.9,165.3 567.2,165.4 563.5,166.2 559.8,167.0 556.2,167.9 552.7,168.9 549.3,169.9 546.0,170.9 542.8,172.1 539.8,173.2 536.8,174.4 534.0,175.7 531.3,177.0 528.7,178.4 526.3,179.8 524.0,181.2 521.8,182.7 519.8,184.2 518.0,185.7 516.3,187.3 514.8,188.9 513.4,190.5 512.2,192.2 511.1,193.8 511.0,194.0" fill="none" stroke="#ff18ff" stroke-width="1.1" stroke-dasharray="9 3"/>
<line x1="510.2" y1="497.1" x2="510.2" y2="192.3" stroke="#ff10ff" stroke-width="1"/>
<line x1="571.0" y1="466.3" x2="571.0" y2="161.5" stroke="#ff10ff" stroke-width="1"/>
<polyline points="510.2,446.3 511.1,444.6 512.2,443.0 513.4,441.3 514.8,439.7 516.3,438.1 518.0,436.5 519.8,435.0 521.8,433.5 524.0,432.0 526.3,430.6 528.7,429.2 531.3,427.8 534.0,426.5 536.8,425.2 539.8,424.0 542.8,422.9 546.0,421.7 549.3,420.7 552.7,419.7 556.2,418.7 559.8,417.8 563.5,417.0 567.2,416.2 571.0,415.5" fill="none" stroke="#1a0a1a" stroke-width="0.9" stroke-opacity="0.85"/>
<polyline points="510.2,395.5 511.1,393.8 512.2,392.2 513.4,390.5 514.8,388.9 516.3,387.3 518.0,385.7 519.8,384.2 521.8,382.7 524.0,381.2 526.3,379.8 528.7,378.4 531.3,377.0 534.0,375.7 536.8,374.4 539.8,373.2 542.8,372.1 546.0,370.9 549.3,369.9 552.7,368.9 556.2,367.9 559.8,367.0 563.5,366.2 567.2,365.4 571.0,364.7" fill="none" stroke="#1a0a1a" stroke-width="0.9" stroke-opacity="0.85"/>
<polyline points="510.2,344.7 511.1,343.0 512.2,341.4 513.4,339.7 514.8,338.1 516.3,336.5 518.0,334.9 519.8,333.4 521.8,331.9 524.0,330.4 526.3,329.0 528.7,327.6 531.3,326.2 534.0,324.9 536.8,323.6 539.8,322.4 542.8,321.3 546.0,320.1 549.3,319.1 552.7,318.1 556.2,317.1 559.8,316.2 563.5,315.4 567.2,314.6 571.0,313.9" fill="none" stroke="#1a0a1a" stroke-width="0.9" stroke-opacity="0.85"/>
<polyline points="510.2,293.9 511.1,292.2 512.2,290.6 513.4,288.9 514.8,287.3 516.3,285.7 518.0,284.1 519.8,282.6 521.8,281.1 524.0,279.6 526.3,278.2 528.7,276.8 531.3,275.4 534.0,274.1 536.8,272.8 539.8,271.6 542.8,270.5 546.0,269.3 549.3,268.3 552.7,267.3 556.2,266.3 559.8,265.4 563.5,264.6 567.2,263.8 571.0,263.1" fill="none" stroke="#1a0a1a" stroke-width="0.9" stroke-opacity="0.85"/>
<polyline points="510.2,243.1 511.1,241.4 512.2,239.8 513.4,238.1 514.8,236.5 516.3,234.9 518.0,233.3 519.8,231.8 521.8,230.3 524.0,228.8 526.3,227.4 528.7,226.0 531.3,224.6 534.0,223.3 536.8,222.0 539.8,220.8 542.8,219.7 546.0,218.5 549.3,217.5 552.7,216.5 556.2,215.5 559.8,214.6 563.5,213.8 567.2,213.0 571.0,212.3" fill="none" stroke="#1a0a1a" stroke-width="0.9" stroke-opacity="0.85"/>
<polyline points="510.2,192.3 511.1,190.6 512.2,189.0 513.4,187.3 514.8,185.7 516.3,184.1 518.0,182.5 519.8,181.0 521.8,179.5 524.0,178.0 526.3,176.6 528.7,175.2 531.3,173.8 534.0,172.5 536.8,171.2 539.8,170.0 542.8,168.9 546.0,167.7 549.3,166.7 552.7,165.7 556.2,164.7 559.8,163.8 563.5,163.0 567.2,162.2 571.0,161.5" fill="none" stroke="#1a0a1a" stroke-width="0.9" stroke-opacity="0.85"/>
<polygon points="438.3,470.5 507.2,492.9 507.2,448.5 438.3,426.1" fill="none" stroke="#ff18ff" stroke-width="1.1" stroke-dasharray="9 3"/>
<polygon points="438.3,419.7 507.2,442.1 507.2,397.7 438.3,375.3" fill="none" stroke="#ff18ff" stroke-width="1.1" stroke-dasharray="9 3"/>
<polygon points="438.3,368.9 507.2,391.3 507.2,346.9 438.3,324.5" fill="none" stroke="#ff18ff" stroke-width="1.1" stroke-dasharray="9 3"/>
<polygon points="438.3,318.1 507.2,340.5 507.2,296.1 438.3,273.7" fill="none" stroke="#ff18ff" stroke-width="1.1" stroke-dasharray="9 3"/>
<polygon points="438.3,267.3 507.2,289.7 507.2,245.3 438.3,222.9" fill="none" stroke="#ff18ff" stroke-width="1.1" stroke-dasharray="9 3"/>
<polygon points="438.3,216.5 507.2,238.9 507.2,194.5 438.3,172.1" fill="none" stroke="#ff18ff" stroke-width="1.1" stroke-dasharray="9 3"/>
<line x1="435.2" y1="472.7" x2="435.2" y2="167.9" stroke="#ff10ff" stroke-width="1"/>
<line x1="510.2" y1="497.1" x2="510.2" y2="192.3" stroke="#ff10ff" stroke-width="1"/>
<polyline points="435.2,421.9 510.2,446.3" fill="none" stroke="#1a0a1a" stroke-width="0.9" stroke-opacity="0.85"/>
<polyline points="435.2,371.1 510.2,395.5" fill="none" stroke="#1a0a1a" stroke-width="0.9" stroke-opacity="0.85"/>
<polyline points="435.2,320.3 510.2,344.7" fill="none" stroke="#1a0a1a" stroke-width="0.9" stroke-opacity="0.85"/>
<polyline points="435.2,269.5 510.2,293.9" fill="none" stroke="#1a0a1a" stroke-width="0.9" stroke-opacity="0.85"/>
<polyline points="435.2,218.7 510.2,243.1" fill="none" stroke="#1a0a1a" stroke-width="0.9" stroke-opacity="0.85"/>
<polyline points="435.2,167.9 510.2,192.3" fill="none" stroke="#1a0a1a" stroke-width="0.9" stroke-opacity="0.85"/>
<polyline points="767.0,379.8 768.1,381.6 768.9,383.5 769.5,385.4 770.0,387.4 770.2,389.3 770.1,391.2 769.9,393.1 769.4,395.1 768.8,397.0 767.9,398.8 766.7,400.7 765.4,402.6 763.9,404.4 762.2,406.2 760.2,407.9 758.1,409.7 755.8,411.3 753.2,413.0 750.5,414.6 747.7,416.1 744.6,417.6 741.4,419.0 738.0,420.3 734.5,421.6 730.8,422.8 727.0,424.0 723.1,425.1 719.1,426.1 714.9,427.0 710.7,427.9 706.3,428.6 701.9,429.3 697.4,429.9 692.8,430.4 688.2,430.8 683.5,431.2 678.8,431.4 674.1,431.6 669.4,431.7 664.6,431.7 660.2,431.5 655.7,431.4 651.1,431.3 646.5,431.4 642.0,431.5 637.4,431.8 632.9,432.1 628.5,432.6 624.1,433.1 619.8,433.8 615.6,434.5 611.5,435.3 607.5,436.2 603.6,437.2 599.8,438.2 596.2,439.4 592.8,440.6 589.5,441.9 586.3,443.2 583.4,444.6 580.6,446.1 578.1,447.6 575.7,449.2 573.5,450.9 571.6,452.5 569.9,454.3 568.4,456.0 567.1,457.8 566.0,459.6 565.2,461.4 564.6,463.3 564.3,465.1 564.2,467.0 564.4,468.8 564.7,470.7 565.4,472.5 566.2,474.4 567.3,476.2 568.6,477.9 570.2,479.7 543.5,492.7 349.6,429.6" fill="none" stroke="#000" stroke-width="1.2" stroke-linejoin="round"/>
<polyline points="767.0,329.0 768.1,330.8 768.9,332.7 769.5,334.6 770.0,336.6 770.2,338.5 770.1,340.4 769.9,342.3 769.4,344.3 768.8,346.2 767.9,348.0 766.7,349.9 765.4,351.8 763.9,353.6 762.2,355.4 760.2,357.1 758.1,358.9 755.8,360.5 753.2,362.2 750.5,363.8 747.7,365.3 744.6,366.8 741.4,368.2 738.0,369.5 734.5,370.8 730.8,372.0 727.0,373.2 723.1,374.3 719.1,375.3 714.9,376.2 710.7,377.1 706.3,377.8 701.9,378.5 697.4,379.1 692.8,379.6 688.2,380.0 683.5,380.4 678.8,380.6 674.1,380.8 669.4,380.9 664.6,380.9 660.2,380.7 655.7,380.6 651.1,380.5 646.5,380.6 642.0,380.7 637.4,381.0 632.9,381.3 628.5,381.8 624.1,382.3 619.8,383.0 615.6,383.7 611.5,384.5 607.5,385.4 603.6,386.4 599.8,387.4 596.2,388.6 592.8,389.8 589.5,391.1 586.3,392.4 583.4,393.8 580.6,395.3 578.1,396.8 575.7,398.4 573.5,400.1 571.6,401.7 569.9,403.5 568.4,405.2 567.1,407.0 566.0,408.8 565.2,410.6 564.6,412.5 564.3,414.3 564.2,416.2 564.4,418.0 564.7,419.9 565.4,421.7 566.2,423.6 567.3,425.4 568.6,427.1 570.2,428.9 543.5,441.9 349.6,378.8" fill="none" stroke="#000" stroke-width="1.2" stroke-linejoin="round"/>
<polyline points="767.0,278.2 768.1,280.0 768.9,281.9 769.5,283.8 770.0,285.8 770.2,287.7 770.1,289.6 769.9,291.5 769.4,293.5 768.8,295.4 767.9,297.2 766.7,299.1 765.4,301.0 763.9,302.8 762.2,304.6 760.2,306.3 758.1,308.1 755.8,309.7 753.2,311.4 750.5,313.0 747.7,314.5 744.6,316.0 741.4,317.4 738.0,318.7 734.5,320.0 730.8,321.2 727.0,322.4 723.1,323.5 719.1,324.5 714.9,325.4 710.7,326.3 706.3,327.0 701.9,327.7 697.4,328.3 692.8,328.8 688.2,329.2 683.5,329.6 678.8,329.8 674.1,330.0 669.4,330.1 664.6,330.1 660.2,329.9 655.7,329.8 651.1,329.7 646.5,329.8 642.0,329.9 637.4,330.2 632.9,330.5 628.5,331.0 624.1,331.5 619.8,332.2 615.6,332.9 611.5,333.7 607.5,334.6 603.6,335.6 599.8,336.6 596.2,337.8 592.8,339.0 589.5,340.3 586.3,341.6 583.4,343.0 580.6,344.5 578.1,346.0 575.7,347.6 573.5,349.3 571.6,350.9 569.9,352.7 568.4,354.4 567.1,356.2 566.0,358.0 565.2,359.8 564.6,361.7 564.3,363.5 564.2,365.4 564.4,367.2 564.7,369.1 565.4,370.9 566.2,372.8 567.3,374.6 568.6,376.3 570.2,378.1 543.5,391.1 349.6,328.0" fill="none" stroke="#000" stroke-width="1.2" stroke-linejoin="round"/>
<polyline points="767.0,227.4 768.1,229.2 768.9,231.1 769.5,233.0 770.0,235.0 770.2,236.9 770.1,238.8 769.9,240.7 769.4,242.7 768.8,244.6 767.9,246.4 766.7,248.3 765.4,250.2 763.9,252.0 762.2,253.8 760.2,255.5 758.1,257.3 755.8,258.9 753.2,260.6 750.5,262.2 747.7,263.7 744.6,265.2 741.4,266.6 738.0,267.9 734.5,269.2 730.8,270.4 727.0,271.6 723.1,272.7 719.1,273.7 714.9,274.6 710.7,275.5 706.3,276.2 701.9,276.9 697.4,277.5 692.8,278.0 688.2,278.4 683.5,278.8 678.8,279.0 674.1,279.2 669.4,279.3 664.6,279.3 660.2,279.1 655.7,279.0 651.1,278.9 646.5,279.0 642.0,279.1 637.4,279.4 632.9,279.7 628.5,280.2 624.1,280.7 619.8,281.4 615.6,282.1 611.5,282.9 607.5,283.8 603.6,284.8 599.8,285.8 596.2,287.0 592.8,288.2 589.5,289.5 586.3,290.8 583.4,292.2 580.6,293.7 578.1,295.2 575.7,296.8 573.5,298.5 571.6,300.1 569.9,301.9 568.4,303.6 567.1,305.4 566.0,307.2 565.2,309.0 564.6,310.9 564.3,312.7 564.2,314.6 564.4,316.4 564.7,318.3 565.4,320.1 566.2,322.0 567.3,323.8 568.6,325.5 570.2,327.3 543.5,340.3 349.6,277.2" fill="none" stroke="#000" stroke-width="1.2" stroke-linejoin="round"/>
<polyline points="767.0,176.6 768.1,178.4 768.9,180.3 769.5,182.2 770.0,184.2 770.2,186.1 770.1,188.0 769.9,189.9 769.4,191.9 768.8,193.8 767.9,195.6 766.7,197.5 765.4,199.4 763.9,201.2 762.2,203.0 760.2,204.7 758.1,206.5 755.8,208.1 753.2,209.8 750.5,211.4 747.7,212.9 744.6,214.4 741.4,215.8 738.0,217.1 734.5,218.4 730.8,219.6 727.0,220.8 723.1,221.9 719.1,222.9 714.9,223.8 710.7,224.7 706.3,225.4 701.9,226.1 697.4,226.7 692.8,227.2 688.2,227.6 683.5,228.0 678.8,228.2 674.1,228.4 669.4,228.5 664.6,228.5 660.2,228.3 655.7,228.2 651.1,228.1 646.5,228.2 642.0,228.3 637.4,228.6 632.9,228.9 628.5,229.4 624.1,229.9 619.8,230.6 615.6,231.3 611.5,232.1 607.5,233.0 603.6,234.0 599.8,235.0 596.2,236.2 592.8,237.4 589.5,238.7 586.3,240.0 583.4,241.4 580.6,242.9 578.1,244.4 575.7,246.0 573.5,247.7 571.6,249.3 569.9,251.1 568.4,252.8 567.1,254.6 566.0,256.4 565.2,258.2 564.6,260.1 564.3,261.9 564.2,263.8 564.4,265.6 564.7,267.5 565.4,269.3 566.2,271.2 567.3,273.0 568.6,274.7 570.2,276.5 543.5,289.5 349.6,226.4" fill="none" stroke="#000" stroke-width="1.2" stroke-linejoin="round"/>
<polyline points="745.5,118.8 746.6,120.7 747.4,122.6 748.1,124.5 748.5,126.4 748.7,128.3 748.7,130.2 748.4,132.2 748.0,134.1 747.3,136.0 746.4,137.9 745.3,139.7 744.0,141.6 742.4,143.4 740.7,145.2 738.8,147.0 736.6,148.7 734.3,150.4 731.8,152.0 729.1,153.6 726.2,155.1 723.1,156.6 719.9,158.0 716.6,159.3 713.0,160.6 709.4,161.9 705.6,163.0 701.6,164.1 697.6,165.1 693.4,166.0 689.2,166.9 684.8,167.6 680.4,168.3 675.9,168.9 671.3,169.4 666.7,169.9 662.1,170.2 657.4,170.5 652.6,170.6 647.9,170.7 643.2,170.7 639.2,170.4 634.3,170.2 629.5,170.1 624.6,170.2 619.8,170.3 614.9,170.6 610.2,170.9 605.5,171.4 600.8,172.0 596.3,172.8 591.9,173.6 587.6,174.5 583.4,175.5 579.4,176.6 575.6,177.8 571.9,179.2 568.5,180.5 565.2,182.0 562.2,183.5 559.3,185.2 556.8,186.8 554.4,188.6 552.4,190.3 550.5,192.2 549.0,194.0 547.7,196.0 546.7,197.9 546.0,199.8 545.5,201.8 545.4,203.8 545.5,205.8 545.9,207.7 546.6,209.7 547.6,211.6 548.8,213.5 550.3,215.4 552.1,217.2 554.2,219.0 556.5,220.8 559.0,222.4 532.4,235.6 348.9,175.9" fill="none" stroke="#000" stroke-width="1.2" stroke-linejoin="round"/>
<polyline points="702.3,53.9 589.9,110.9 460.2,68.7" fill="none" stroke="#000" stroke-width="1.2" stroke-linejoin="round"/>
<line x1="435.2" y1="472.7" x2="435.2" y2="167.9" stroke="#201020" stroke-width="1" stroke-opacity="0.8"/>
<line x1="510.2" y1="497.1" x2="510.2" y2="192.3" stroke="#201020" stroke-width="1" stroke-opacity="0.8"/>
<line x1="571.0" y1="466.3" x2="571.0" y2="161.5" stroke="#201020" stroke-width="1" stroke-opacity="0.8"/>
<line x1="648.7" y1="462.3" x2="648.7" y2="157.5" stroke="#201020" stroke-width="1" stroke-opacity="0.8"/>
<polyline points="435.2,475.3 510.2,499.7" fill="none" stroke="#18d818" stroke-width="5" stroke-dasharray="1.2 0.7" stroke-opacity="0.95"/><polyline points="435.2,476.2 510.2,500.6" fill="none" stroke="#35e035" stroke-width="4" stroke-opacity="0.5"/>
<polyline points="510.2,499.7 511.1,498.0 512.2,496.4 513.4,494.7 514.8,493.1 516.3,491.5 518.0,489.9 519.8,488.4 521.8,486.9 524.0,485.4 526.3,484.0 528.7,482.6 531.3,481.2 534.0,479.9 536.8,478.6 539.8,477.4 542.8,476.3 546.0,475.1 549.3,474.1 552.7,473.1 556.2,472.1 559.8,471.2 563.5,470.4 567.2,469.6 571.0,468.9" fill="none" stroke="#18d818" stroke-width="5" stroke-dasharray="1.2 0.7" stroke-opacity="0.95"/><polyline points="510.2,500.6 511.1,498.9 512.2,497.3 513.4,495.6 514.8,494.0 516.3,492.4 518.0,490.8 519.8,489.3 521.8,487.8 524.0,486.3 526.3,484.9 528.7,483.5 531.3,482.1 534.0,480.8 536.8,479.5 539.8,478.3 542.8,477.2 546.0,476.0 549.3,475.0 552.7,474.0 556.2,473.0 559.8,472.1 563.5,471.3 567.2,470.5 571.0,469.8" fill="none" stroke="#35e035" stroke-width="4" stroke-opacity="0.5"/>
<polyline points="708.6,434.5 708.5,436.3 708.2,438.0 707.6,439.7 706.8,441.5 705.8,443.2 704.5,444.9 703.0,446.5 701.2,448.1 699.3,449.7 697.1,451.2 694.7,452.6 692.0,454.1 689.2,455.4 686.3,456.7 683.1,457.9 679.8,459.0 676.3,460.0 672.7,461.0 668.9,461.9 665.1,462.7 661.1,463.4 657.0,464.0 652.9,464.5 648.7,464.9" fill="none" stroke="#18d818" stroke-width="5" stroke-dasharray="1.2 0.7" stroke-opacity="0.95"/><polyline points="708.6,435.4 708.5,437.2 708.2,438.9 707.6,440.6 706.8,442.4 705.8,444.1 704.5,445.8 703.0,447.4 701.2,449.0 699.3,450.6 697.1,452.1 694.7,453.5 692.0,455.0 689.2,456.3 686.3,457.6 683.1,458.8 679.8,459.9 676.3,460.9 672.7,461.9 668.9,462.8 665.1,463.6 661.1,464.3 657.0,464.9 652.9,465.4 648.7,465.8" fill="none" stroke="#35e035" stroke-width="4" stroke-opacity="0.5"/>
<polyline points="642.2,406.7 589.8,433.3" fill="none" stroke="#18d818" stroke-width="5" stroke-dasharray="1.2 0.7" stroke-opacity="0.95"/><polyline points="642.2,407.6 589.8,434.2" fill="none" stroke="#35e035" stroke-width="4" stroke-opacity="0.5"/>
<rect x="433.4" y="471.1" width="3.6" height="3.2" fill="#ff0000" fill-opacity="1.0"/>
<rect x="508.4" y="495.5" width="3.6" height="3.2" fill="#ff0000" fill-opacity="1.0"/>
<rect x="569.2" y="464.7" width="3.6" height="3.2" fill="#ff0000" fill-opacity="1.0"/>
<rect x="706.9" y="430.3" width="3.6" height="3.2" fill="#ff0000" fill-opacity="1.0"/>
<rect x="646.9" y="460.7" width="3.6" height="3.2" fill="#ff0000" fill-opacity="1.0"/>
<rect x="433.4" y="420.3" width="3.6" height="3.2" fill="#ff0000" fill-opacity="1.0"/>
<rect x="508.4" y="444.7" width="3.6" height="3.2" fill="#ff0000" fill-opacity="1.0"/>
<rect x="569.2" y="413.9" width="3.6" height="3.2" fill="#ff0000" fill-opacity="1.0"/>
<rect x="706.9" y="379.5" width="3.6" height="3.2" fill="#ff0000" fill-opacity="1.0"/>
<rect x="646.9" y="409.9" width="3.6" height="3.2" fill="#ff0000" fill-opacity="1.0"/>
<rect x="433.4" y="369.5" width="3.6" height="3.2" fill="#ff0000" fill-opacity="1.0"/>
<rect x="508.4" y="393.9" width="3.6" height="3.2" fill="#ff0000" fill-opacity="1.0"/>
<rect x="569.2" y="363.1" width="3.6" height="3.2" fill="#ff0000" fill-opacity="1.0"/>
<rect x="706.9" y="328.7" width="3.6" height="3.2" fill="#ff0000" fill-opacity="1.0"/>
<rect x="646.9" y="359.1" width="3.6" height="3.2" fill="#ff0000" fill-opacity="1.0"/>
<rect x="433.4" y="318.7" width="3.6" height="3.2" fill="#ff0000" fill-opacity="1.0"/>
<rect x="508.4" y="343.1" width="3.6" height="3.2" fill="#ff0000" fill-opacity="1.0"/>
<rect x="569.2" y="312.3" width="3.6" height="3.2" fill="#ff0000" fill-opacity="1.0"/>
<rect x="706.9" y="277.9" width="3.6" height="3.2" fill="#ff0000" fill-opacity="1.0"/>
<rect x="646.9" y="308.3" width="3.6" height="3.2" fill="#ff0000" fill-opacity="1.0"/>
<rect x="433.4" y="267.9" width="3.6" height="3.2" fill="#ff0000" fill-opacity="1.0"/>
<rect x="508.4" y="292.3" width="3.6" height="3.2" fill="#ff0000" fill-opacity="1.0"/>
<rect x="569.2" y="261.5" width="3.6" height="3.2" fill="#ff0000" fill-opacity="1.0"/>
<rect x="706.9" y="227.1" width="3.6" height="3.2" fill="#ff0000" fill-opacity="1.0"/>
<rect x="646.9" y="257.5" width="3.6" height="3.2" fill="#ff0000" fill-opacity="1.0"/>
<rect x="433.4" y="217.1" width="3.6" height="3.2" fill="#ff0000" fill-opacity="1.0"/>
<rect x="508.4" y="241.5" width="3.6" height="3.2" fill="#ff0000" fill-opacity="1.0"/>
<rect x="569.2" y="210.7" width="3.6" height="3.2" fill="#ff0000" fill-opacity="1.0"/>
<rect x="706.9" y="176.3" width="3.6" height="3.2" fill="#ff0000" fill-opacity="1.0"/>
<rect x="646.9" y="206.7" width="3.6" height="3.2" fill="#ff0000" fill-opacity="1.0"/>
<rect x="433.4" y="166.3" width="3.6" height="3.2" fill="#ff0000" fill-opacity="1.0"/>
<rect x="508.4" y="190.7" width="3.6" height="3.2" fill="#ff0000" fill-opacity="1.0"/>
<rect x="569.2" y="159.9" width="3.6" height="3.2" fill="#ff0000" fill-opacity="1.0"/>
<rect x="706.9" y="125.5" width="3.6" height="3.2" fill="#ff0000" fill-opacity="1.0"/>
<rect x="646.9" y="155.9" width="3.6" height="3.2" fill="#ff0000" fill-opacity="1.0"/>
<rect x="541.0" y="490.5" width="5" height="4.4" fill="#ff0000" fill-opacity="1.0"/>
<rect x="567.0" y="477.3" width="5" height="4.4" fill="#ff0000" fill-opacity="1.0"/>
<rect x="662.4" y="429.6" width="5" height="4.4" fill="#ff0000" fill-opacity="1.0"/>
<rect x="765.1" y="378.1" width="4.4" height="3.6" fill="#ff0000" fill-opacity="1.0"/>
<rect x="541.0" y="439.7" width="5" height="4.4" fill="#ff0000" fill-opacity="1.0"/>
<rect x="567.0" y="426.5" width="5" height="4.4" fill="#ff0000" fill-opacity="1.0"/>
<rect x="662.4" y="378.8" width="5" height="4.4" fill="#ff0000" fill-opacity="1.0"/>
<rect x="765.1" y="327.3" width="4.4" height="3.6" fill="#ff0000" fill-opacity="1.0"/>
<rect x="541.0" y="388.9" width="5" height="4.4" fill="#ff0000" fill-opacity="1.0"/>
<rect x="567.0" y="375.7" width="5" height="4.4" fill="#ff0000" fill-opacity="1.0"/>
<rect x="662.4" y="328.0" width="5" height="4.4" fill="#ff0000" fill-opacity="1.0"/>
<rect x="765.1" y="276.5" width="4.4" height="3.6" fill="#ff0000" fill-opacity="1.0"/>
<rect x="541.0" y="338.1" width="5" height="4.4" fill="#ff0000" fill-opacity="1.0"/>
<rect x="567.0" y="324.9" width="5" height="4.4" fill="#ff0000" fill-opacity="1.0"/>
<rect x="662.4" y="277.2" width="5" height="4.4" fill="#ff0000" fill-opacity="1.0"/>
<rect x="765.1" y="225.7" width="4.4" height="3.6" fill="#ff0000" fill-opacity="1.0"/>
<rect x="541.0" y="287.3" width="5" height="4.4" fill="#ff0000" fill-opacity="1.0"/>
<rect x="567.0" y="274.1" width="5" height="4.4" fill="#ff0000" fill-opacity="1.0"/>
<rect x="662.4" y="226.4" width="5" height="4.4" fill="#ff0000" fill-opacity="1.0"/>
<rect x="765.1" y="174.9" width="4.4" height="3.6" fill="#ff0000" fill-opacity="1.0"/>
<rect x="463.7" y="262.3" width="4.6" height="4" fill="#ff0000" fill-opacity="1.0"/>
<rect x="473.9" y="209.0" width="4.4" height="3.2" fill="#ff0000" fill-opacity="1.0"/>
<rect x="529.9" y="233.4" width="5" height="4.4" fill="#ff0000" fill-opacity="1.0"/>
<rect x="556.3" y="220.2" width="5" height="4.4" fill="#ff0000" fill-opacity="1.0"/>
<rect x="641.4" y="168.7" width="5" height="4.4" fill="#ff0000" fill-opacity="1.0"/>
<rect x="744.1" y="117.2" width="4.4" height="3.6" fill="#ff0000" fill-opacity="1.0"/>
<rect x="570.3" y="9.9" width="4.6" height="3.6" fill="#ff0000" fill-opacity="1.0"/>
<rect x="700.0" y="52.1" width="4.6" height="3.6" fill="#ff0000" fill-opacity="1.0"/>
<rect x="587.6" y="109.1" width="4.6" height="3.6" fill="#ff0000" fill-opacity="1.0"/>
<rect x="457.9" y="66.9" width="4.6" height="3.6" fill="#ff0000" fill-opacity="1.0"/>
<rect x="607.0" y="36.0" width="4.6" height="3.6" fill="#ff0000" fill-opacity="1.0"/>
<rect x="581.0" y="49.2" width="4.6" height="3.6" fill="#ff0000" fill-opacity="1.0"/>
<rect x="613.9" y="59.9" width="4.6" height="3.6" fill="#ff0000" fill-opacity="1.0"/>
<rect x="639.9" y="46.7" width="4.6" height="3.6" fill="#ff0000" fill-opacity="1.0"/>
<rect x="587.5" y="73.3" width="4.6" height="3.6" fill="#ff0000" fill-opacity="1.0"/>
<rect x="614.2" y="110.8" width="4" height="3.4" fill="#ff0000" fill-opacity="1.0"/>
<rect x="640.2" y="97.6" width="4" height="3.4" fill="#ff0000" fill-opacity="1.0"/>
<ellipse cx="531.3" cy="427.8" rx="2.6" ry="1.6" fill="#e03040" fill-opacity="0.4"/><rect x="530.1" y="427.2" width="2.4" height="1.2" fill="#ff2020" fill-opacity="0.35"/>
<ellipse cx="692.0" cy="400.7" rx="2.6" ry="1.6" fill="#e03040" fill-opacity="0.4"/><rect x="690.8" y="400.1" width="2.4" height="1.2" fill="#ff2020" fill-opacity="0.35"/>
<ellipse cx="472.8" cy="434.1" rx="2.6" ry="1.6" fill="#e03040" fill-opacity="0.4"/><rect x="471.6" y="433.5" width="2.4" height="1.2" fill="#ff2020" fill-opacity="0.35"/>
<ellipse cx="531.3" cy="377.0" rx="2.6" ry="1.6" fill="#e03040" fill-opacity="0.4"/><rect x="530.1" y="376.4" width="2.4" height="1.2" fill="#ff2020" fill-opacity="0.35"/>
<ellipse cx="692.0" cy="349.9" rx="2.6" ry="1.6" fill="#e03040" fill-opacity="0.4"/><rect x="690.8" y="349.3" width="2.4" height="1.2" fill="#ff2020" fill-opacity="0.35"/>
<ellipse cx="472.8" cy="383.3" rx="2.6" ry="1.6" fill="#e03040" fill-opacity="0.4"/><rect x="471.6" y="382.7" width="2.4" height="1.2" fill="#ff2020" fill-opacity="0.35"/>
<ellipse cx="531.3" cy="326.2" rx="2.6" ry="1.6" fill="#e03040" fill-opacity="0.4"/><rect x="530.1" y="325.6" width="2.4" height="1.2" fill="#ff2020" fill-opacity="0.35"/>
<ellipse cx="692.0" cy="299.1" rx="2.6" ry="1.6" fill="#e03040" fill-opacity="0.4"/><rect x="690.8" y="298.5" width="2.4" height="1.2" fill="#ff2020" fill-opacity="0.35"/>
<ellipse cx="472.8" cy="332.5" rx="2.6" ry="1.6" fill="#e03040" fill-opacity="0.4"/><rect x="471.6" y="331.9" width="2.4" height="1.2" fill="#ff2020" fill-opacity="0.35"/>
<ellipse cx="531.3" cy="275.4" rx="2.6" ry="1.6" fill="#e03040" fill-opacity="0.4"/><rect x="530.1" y="274.8" width="2.4" height="1.2" fill="#ff2020" fill-opacity="0.35"/>
<ellipse cx="692.0" cy="248.3" rx="2.6" ry="1.6" fill="#e03040" fill-opacity="0.4"/><rect x="690.8" y="247.7" width="2.4" height="1.2" fill="#ff2020" fill-opacity="0.35"/>
<ellipse cx="472.8" cy="281.7" rx="2.6" ry="1.6" fill="#e03040" fill-opacity="0.4"/><rect x="471.6" y="281.1" width="2.4" height="1.2" fill="#ff2020" fill-opacity="0.35"/>
<ellipse cx="531.3" cy="224.6" rx="2.6" ry="1.6" fill="#e03040" fill-opacity="0.4"/><rect x="530.1" y="224.0" width="2.4" height="1.2" fill="#ff2020" fill-opacity="0.35"/>
<ellipse cx="692.0" cy="197.5" rx="2.6" ry="1.6" fill="#e03040" fill-opacity="0.4"/><rect x="690.8" y="196.9" width="2.4" height="1.2" fill="#ff2020" fill-opacity="0.35"/>
<ellipse cx="472.8" cy="230.9" rx="2.6" ry="1.6" fill="#e03040" fill-opacity="0.4"/><rect x="471.6" y="230.3" width="2.4" height="1.2" fill="#ff2020" fill-opacity="0.35"/>
<ellipse cx="531.3" cy="173.8" rx="2.6" ry="1.6" fill="#e03040" fill-opacity="0.4"/><rect x="530.1" y="173.2" width="2.4" height="1.2" fill="#ff2020" fill-opacity="0.35"/>
<ellipse cx="692.0" cy="146.7" rx="2.6" ry="1.6" fill="#e03040" fill-opacity="0.4"/><rect x="690.8" y="146.1" width="2.4" height="1.2" fill="#ff2020" fill-opacity="0.35"/>
<ellipse cx="472.8" cy="180.1" rx="2.6" ry="1.6" fill="#e03040" fill-opacity="0.4"/><rect x="471.6" y="179.5" width="2.4" height="1.2" fill="#ff2020" fill-opacity="0.35"/>
<path d="M597.5 191.2 L604.0999999999999 197.8 M597.5 197.8 L604.0999999999999 191.2" stroke="#98c498" stroke-width="0.8" fill="none"/>
<path d="M597.5 242.0 L604.0999999999999 248.60000000000002 M597.5 248.60000000000002 L604.0999999999999 242.0" stroke="#98c498" stroke-width="0.8" fill="none"/>
<path d="M597.5 292.8 L604.0999999999999 299.40000000000003 M597.5 299.40000000000003 L604.0999999999999 292.8" stroke="#98c498" stroke-width="0.8" fill="none"/>
<path d="M597.5 343.59999999999997 L604.0999999999999 350.2 M597.5 350.2 L604.0999999999999 343.59999999999997" stroke="#98c498" stroke-width="0.8" fill="none"/>
<path d="M597.5 394.4 L604.0999999999999 401.0 M597.5 401.0 L604.0999999999999 394.4" stroke="#98c498" stroke-width="0.8" fill="none"/>
<path d="M597.0 444.7 L604.5999999999999 452.3 M597.0 452.3 L604.5999999999999 444.7" stroke="#404040" stroke-width="0.9" fill="none"/>
<path d="M597.0 495.49999999999994 L604.5999999999999 503.09999999999997 M597.0 503.09999999999997 L604.5999999999999 495.49999999999994" stroke="#404040" stroke-width="0.9" fill="none"/>
<path d="M650.8 259.90000000000003 L657.2 266.3 M650.8 266.3 L657.2 259.90000000000003" stroke="#98c498" stroke-width="0.8" fill="none"/>
<path d="M650.8 310.70000000000005 L657.2 317.1 M650.8 317.1 L657.2 310.70000000000005" stroke="#98c498" stroke-width="0.8" fill="none"/>
<path d="M650.8 361.50000000000006 L657.2 367.90000000000003 M650.8 367.90000000000003 L657.2 361.50000000000006" stroke="#98c498" stroke-width="0.8" fill="none"/>
<path d="M650.8 412.3 L657.2 418.7 M650.8 418.7 L657.2 412.3" stroke="#98c498" stroke-width="0.8" fill="none"/>
<path d="M650.8 463.1 L657.2 469.5 M650.8 469.5 L657.2 463.1" stroke="#98c498" stroke-width="0.8" fill="none"/>
<path d="M663.5 180.5 L669.9000000000001 186.89999999999998 M663.5 186.89999999999998 L669.9000000000001 180.5" stroke="#98c498" stroke-width="0.8" fill="none"/>
<path d="M663.5 231.3 L669.9000000000001 237.7 M663.5 237.7 L669.9000000000001 231.3" stroke="#98c498" stroke-width="0.8" fill="none"/>
<path d="M663.5 282.09999999999997 L669.9000000000001 288.49999999999994 M663.5 288.49999999999994 L669.9000000000001 282.09999999999997" stroke="#98c498" stroke-width="0.8" fill="none"/>
<path d="M616.5 120.0 L622.9000000000001 126.4 M616.5 126.4 L622.9000000000001 120.0" stroke="#98c498" stroke-width="0.9" fill="none"/>
<path d="M616.5 170.8 L622.9000000000001 177.2 M616.5 177.2 L622.9000000000001 170.8" stroke="#98c498" stroke-width="0.9" fill="none"/>
<path d="M615.7 424.6 L623.7 432.6 M615.7 432.6 L623.7 424.6" stroke="#404040" stroke-width="0.9" fill="none"/>
<path d="M640.8 124.3 L649.2 132.7 M640.8 132.7 L649.2 124.3" stroke="#404040" stroke-width="1.0" fill="none"/>
<path d="M626.9 199.0 L634.1 206.2 M626.9 206.2 L634.1 199.0" stroke="#98c498" stroke-width="0.9" fill="none"/>
<path d="M649.5 461.5 L657.5 469.5 M649.5 469.5 L657.5 461.5" stroke="#404040" stroke-width="0.9" fill="none"/>
<line x1="566.4" y1="379.2" x2="587.1" y2="386.0" stroke="#e01010" stroke-width="2.6"/><path d="M595.2 388.6 L586.1 389.0 L588.1 382.9 Z" fill="#e01010"/>
<line x1="566.4" y1="379.2" x2="548.9" y2="387.4" stroke="#18d818" stroke-width="2.6"/><path d="M541.2 391.0 L547.5 384.5 L550.3 390.3 Z" fill="#18d818"/>
<line x1="566.4" y1="379.2" x2="566.2" y2="405.3" stroke="#1414e0" stroke-width="2.6"/><path d="M566.2 413.8 L563.0 405.3 L569.4 405.3 Z" fill="#1414e0"/>
<circle cx="566.4" cy="379.2" r="2.9" fill="#f4e020" stroke="#c8a800" stroke-width="0.5"/>
<text x="604.8" y="396.3" font-family="Liberation Sans, sans-serif" font-size="11" font-weight="bold" text-anchor="middle" fill="#f01010">X</text>
<text x="534.3" y="398.8" font-family="Liberation Sans, sans-serif" font-size="11" font-weight="bold" text-anchor="middle" fill="#20c828">Y</text>
<text x="566.2" y="428.6" font-family="Liberation Sans, sans-serif" font-size="11" font-weight="bold" text-anchor="middle" fill="#2020e8">Z</text>
</svg>
<div id="panel"></div>
<div id="title">Navigator - Data</div>
<div id="close"><svg width="18" height="18" viewBox="0 0 18 18"><path d="M6.6 7 L11.4 11.8 M11.4 7 L6.6 11.8" stroke="#fff" stroke-width="1.9"/></svg></div>
<div id="tree"></div>
<div id="track"></div><div id="thumb"></div>
<div class="row" style="top:47px"><span class="a" style="left:16px;top:1px"><svg class="ic" width="16" height="16" viewBox="0 0 16 16"><rect x="0" y="2" width="16" height="12" fill="#2a2f7a"/><rect x="0" y="8.2" width="16" height="1.6" fill="#fff"/><rect x="4.2" y="2" width="1.3" height="12" fill="#fff"/><path d="M5 4 L14 7.6" stroke="#fff" stroke-width="0.9"/></svg></span><span class="t" style="left:37px">RFEM</span></div><div class="row" style="top:65px"><span class="a" style="left:16px;top:4px"><svg class="ch" width="12" height="10" viewBox="0 0 12 10"><path d="M1.5 2.5 L6 7 L10.5 2.5" fill="none" stroke="#222" stroke-width="1.5"/></svg></span><span class="a" style="left:37px;top:1px"><svg class="ic" width="16" height="16" viewBox="0 0 16 16"><path d="M2.5 0.5 H10 L13.5 4 V15.5 H2.5 Z" fill="#fff" stroke="#555" stroke-width="1"/><path d="M10 0.5 V4 H13.5" fill="none" stroke="#555" stroke-width="1"/><path d="M0.5 9.5 L7 5 L12.5 8 L8 13 Z" fill="#3b6fb5"/><path d="M2 9.6 L7 6.3 L10.5 8.2" stroke="#9cc3ee" stroke-width="1" fill="none"/></svg></span><span class="t b" style="left:57px">Webinar DYNAM RFEM 6 Ende.rf6*</span></div><div class="row" style="top:83px"><span class="a" style="left:37px;top:4px"><svg class="ch" width="12" height="10" viewBox="0 0 12 10"><path d="M1.5 2.5 L6 7 L10.5 2.5" fill="none" stroke="#222" stroke-width="1.5"/></svg></span><span class="a" style="left:56px;top:1px"><svg class="ic" width="16" height="16" viewBox="0 0 16 16"><path d="M0.8 3 Q0.8 1.8 2 1.8 H6 L7.4 3.4 H14.2 Q15.4 3.4 15.4 4.6 V13.2 Q15.4 14.4 14.2 14.4 H2 Q0.8 14.4 0.8 13.2 Z" fill="#f6eaa8" stroke="#dccb86" stroke-width="1"/><path d="M0.8 4.8 H15.4" stroke="#e9da96" stroke-width="0.8"/></svg></span><span class="t" style="left:77px">Basic Objects</span></div><div class="row" style="top:101px"><span class="a" style="left:59px;top:3px"><svg class="ch" width="10" height="12" viewBox="0 0 10 12"><path d="M2.6 2.2 L6.4 6 L2.6 9.8" fill="none" stroke="#858585" stroke-width="1.35"/></svg></span><span class="a" style="left:76px;top:1px"><svg class="ic" width="16" height="16" viewBox="0 0 16 16"><circle cx="5" cy="4.6" r="3.6" fill="#9aa6e6"/><circle cx="11.4" cy="5" r="3.7" fill="#f3d23a"/><circle cx="4.8" cy="11.3" r="3.7" fill="#35b04a"/><circle cx="11.3" cy="11.6" r="3.6" fill="#e23b3b"/><circle cx="8" cy="8.2" r="1.6" fill="#fff"/></svg></span><span class="t" style="left:97px">Materials</span></div><div class="row" style="top:119px"><span class="a" style="left:59px;top:3px"><svg class="ch" width="10" height="12" viewBox="0 0 10 12"><path d="M2.6 2.2 L6.4 6 L2.6 9.8" fill="none" stroke="#858585" stroke-width="1.35"/></svg></span><span class="a" style="left:76px;top:1px"><svg class="ic" width="16" height="16" viewBox="0 0 16 16"><path d="M5 4 L13.5 1 V10.5 L6 13.5 Z" fill="#6d93d6"/><path d="M1.5 5 H8.5 V7 H6 V12 H8.5 V14 H1.5 V12 H4 V7 H1.5 Z" fill="#e02626"/></svg></span><span class="t" style="left:97px">Sections</span></div><div class="row" style="top:137px"><span class="a" style="left:57px;top:4px"><svg class="ch" width="12" height="10" viewBox="0 0 12 10"><path d="M1.5 2.5 L6 7 L10.5 2.5" fill="none" stroke="#222" stroke-width="1.5"/></svg></span><span class="a" style="left:76px;top:1px"><svg class="ic" width="16" height="16" viewBox="0 0 16 16"><path d="M1.5 6.2 L9 4 L14.8 5 L14.8 9.6 L7.5 12.4 L1.5 11 Z" fill="#8db1e4"/><path d="M1.5 6.2 L7.5 7.6 L14.8 5" fill="none" stroke="#d6e6fa" stroke-width="0.9"/><path d="M7.5 7.6 V12.4 L14.8 9.6 V5 Z" fill="#4a6fb0"/></svg></span><span class="t" style="left:97px">Thicknesses</span></div><div class="row" style="top:155px"><span class="a sw" style="left:96px;top:4px;background:#ccffff"></span><span class="t" style="left:112px">1 - Uniform | d : 300.0 mm | <span class="nv">1 - C30/37</span></span></div><div class="row" style="top:173px"><div class="sel"></div><span class="a sw" style="left:96px;top:4px;background:#a9a840"></span><span class="t" style="left:112px">2 - Uniform | d : 200.0 mm | <span class="nv">1 - C30/37</span></span></div><div class="row" style="top:191px"><span class="a" style="left:59px;top:3px"><svg class="ch" width="10" height="12" viewBox="0 0 10 12"><path d="M2.6 2.2 L6.4 6 L2.6 9.8" fill="none" stroke="#858585" stroke-width="1.35"/></svg></span><span class="a" style="left:76px;top:1px"><svg class="ic" width="16" height="16" viewBox="0 0 16 16"><circle cx="7.5" cy="8.5" r="1.5" fill="#e01818"/></svg></span><span class="t" style="left:97px">Nodes</span></div><div class="row" style="top:209px"><span class="a" style="left:59px;top:3px"><svg class="ch" width="10" height="12" viewBox="0 0 10 12"><path d="M2.6 2.2 L6.4 6 L2.6 9.8" fill="none" stroke="#858585" stroke-width="1.35"/></svg></span><span class="a" style="left:76px;top:1px"><svg class="ic" width="16" height="16" viewBox="0 0 16 16"><path d="M2 14 L13.5 2.5" stroke="#111" stroke-width="1.3"/><circle cx="2" cy="14" r="1.4" fill="#e01818"/><circle cx="13.5" cy="2.5" r="1.4" fill="#e01818"/></svg></span><span class="t" style="left:97px">Lines</span></div><div class="row" style="top:227px"><span class="a" style="left:59px;top:3px"><svg class="ch" width="10" height="12" viewBox="0 0 10 12"><path d="M2.6 2.2 L6.4 6 L2.6 9.8" fill="none" stroke="#858585" stroke-width="1.35"/></svg></span><span class="a" style="left:76px;top:1px"><svg class="ic" width="16" height="16" viewBox="0 0 16 16"><path d="M1.5 14 L13.5 2" stroke="#a9b9dd" stroke-width="3"/><path d="M1.5 14 L13.5 2" stroke="#7d8fbd" stroke-width="0.8"/><circle cx="1.8" cy="14" r="1.4" fill="#e01818"/><circle cx="13.6" cy="2" r="1.4" fill="#e01818"/><path d="M10.5 10.5 H15 M12.75 10.5 V15 M10.5 15 H15" stroke="#222" stroke-width="0.9" fill="none"/></svg></span><span class="t" style="left:97px">Members</span></div><div class="row" style="top:245px"><span class="a" style="left:59px;top:3px"><svg class="ch" width="10" height="12" viewBox="0 0 10 12"><path d="M2.6 2.2 L6.4 6 L2.6 9.8" fill="none" stroke="#858585" stroke-width="1.35"/></svg></span><span class="a" style="left:76px;top:1px"><svg class="ic" width="16" height="16" viewBox="0 0 16 16"><path d="M0.8 7.2 L7.2 4 L15.4 9 L8 12.6 Z" fill="#6e98d8"/><path d="M0.8 7.2 L7.2 4 L15.4 9" fill="none" stroke="#b7d0f2" stroke-width="0.8"/><path d="M0.8 7.2 L8 12.6 L15.4 9" fill="none" stroke="#41639f" stroke-width="0.9"/></svg></span><span class="t" style="left:97px">Surfaces</span></div><div class="row" style="top:263px"><span class="a" style="left:76px;top:1px"><svg class="ic" width="16" height="16" viewBox="0 0 16 16"><rect x="1" y="1.5" width="14" height="13" fill="#7fa6e0" stroke="#4a6aa8" stroke-width="1"/><circle cx="7.6" cy="7.6" r="3.6" fill="#fff" stroke="#5577b5" stroke-width="0.7"/></svg></span><span class="t" style="left:97px">Openings</span></div><div class="row" style="top:281px"><span class="a" style="left:76px;top:1px"><svg class="ic" width="16" height="16" viewBox="0 0 16 16"><path d="M1.5 4 L10.5 4 L14.5 2 L5 2 Z" fill="#c9dcf6"/><rect x="1.5" y="4" width="9.5" height="10" fill="#93b6e8"/><path d="M11 4 L14.5 2 V11.5 L11 14 Z" fill="#4f76b8"/></svg></span><span class="t" style="left:97px">Solids</span></div><div class="row" style="top:299px"><span class="a" style="left:76px;top:1px"><svg class="ic" width="16" height="16" viewBox="0 0 16 16"><path d="M1.5 14 L13 2.5" stroke="#111" stroke-width="1.2"/><path d="M5 14 L14 5" stroke="#555" stroke-width="0.7"/><circle cx="1.8" cy="14" r="1.3" fill="#e01818"/><circle cx="7.2" cy="8.4" r="1.3" fill="#e01818"/><circle cx="13" cy="2.5" r="1.3" fill="#e01818"/><path d="M10.5 13 H15.5 M13 10.5 V15.5" stroke="#111" stroke-width="1.2"/></svg></span><span class="t" style="left:97px">Line Sets</span></div><div class="row" style="top:317px"><span class="a" style="left:76px;top:1px"><svg class="ic" width="16" height="16" viewBox="0 0 16 16"><path d="M1.5 14 L13 2.5" stroke="#a9b9dd" stroke-width="3"/><path d="M5 14 L14 5" stroke="#555" stroke-width="0.7"/><circle cx="1.8" cy="14" r="1.3" fill="#e01818"/><circle cx="7.2" cy="8.4" r="1.3" fill="#e01818"/><circle cx="13" cy="2.5" r="1.3" fill="#e01818"/><path d="M10.5 13 H15.5 M13 10.5 V15.5" stroke="#111" stroke-width="1.2"/></svg></span><span class="t" style="left:97px">Member Sets</span></div><div class="row" style="top:335px"><span class="a" style="left:76px;top:1px"><svg class="ic" width="16" height="16" viewBox="0 0 16 16"><path d="M0.8 6.2 L7.2 3 L15.4 8 L8 11.6 Z" fill="#6e98d8"/><path d="M0.8 6.2 L7.2 3 L15.4 8" fill="none" stroke="#b7d0f2" stroke-width="0.8"/><path d="M0.8 6.2 L8 11.6 L15.4 8" fill="none" stroke="#41639f" stroke-width="0.9"/><path d="M10.5 13 H15.5 M13 10.5 V15.5" stroke="#111" stroke-width="1.2"/></svg></span><span class="t" style="left:97px">Surface Sets</span></div><div class="row" style="top:353px"><span class="a" style="left:76px;top:1px"><svg class="ic" width="16" height="16" viewBox="0 0 16 16"><path d="M1 3.5 L8.5 3.5 L11.5 2 L4 2 Z" fill="#c9dcf6"/><rect x="1" y="3.5" width="8" height="8.5" fill="#93b6e8"/><path d="M9 3.5 L11.5 2 V10 L9 12 Z" fill="#4f76b8"/><path d="M10.5 13 H15.5 M13 10.5 V15.5" stroke="#111" stroke-width="1.2"/></svg></span><span class="t" style="left:97px">Solid Sets</span></div><div class="row" style="top:371px"><span class="a" style="left:39px;top:3px"><svg class="ch" width="10" height="12" viewBox="0 0 10 12"><path d="M2.6 2.2 L6.4 6 L2.6 9.8" fill="none" stroke="#858585" stroke-width="1.35"/></svg></span><span class="a" style="left:56px;top:1px"><svg class="ic" width="16" height="16" viewBox="0 0 16 16"><path d="M0.8 3 Q0.8 1.8 2 1.8 H6 L7.4 3.4 H14.2 Q15.4 3.4 15.4 4.6 V13.2 Q15.4 14.4 14.2 14.4 H2 Q0.8 14.4 0.8 13.2 Z" fill="#f6eaa8" stroke="#dccb86" stroke-width="1"/><path d="M0.8 4.8 H15.4" stroke="#e9da96" stroke-width="0.8"/></svg></span><span class="t" style="left:77px">Special Objects</span></div><div class="row" style="top:389px"><span class="a" style="left:39px;top:3px"><svg class="ch" width="10" height="12" viewBox="0 0 10 12"><path d="M2.6 2.2 L6.4 6 L2.6 9.8" fill="none" stroke="#858585" stroke-width="1.35"/></svg></span><span class="a" style="left:56px;top:1px"><svg class="ic" width="16" height="16" viewBox="0 0 16 16"><path d="M0.8 3 Q0.8 1.8 2 1.8 H6 L7.4 3.4 H14.2 Q15.4 3.4 15.4 4.6 V13.2 Q15.4 14.4 14.2 14.4 H2 Q0.8 14.4 0.8 13.2 Z" fill="#f6eaa8" stroke="#dccb86" stroke-width="1"/><path d="M0.8 4.8 H15.4" stroke="#e9da96" stroke-width="0.8"/></svg></span><span class="t" style="left:77px">Types for Nodes</span></div><div class="row" style="top:407px"><span class="a" style="left:39px;top:3px"><svg class="ch" width="10" height="12" viewBox="0 0 10 12"><path d="M2.6 2.2 L6.4 6 L2.6 9.8" fill="none" stroke="#858585" stroke-width="1.35"/></svg></span><span class="a" style="left:56px;top:1px"><svg class="ic" width="16" height="16" viewBox="0 0 16 16"><path d="M0.8 3 Q0.8 1.8 2 1.8 H6 L7.4 3.4 H14.2 Q15.4 3.4 15.4 4.6 V13.2 Q15.4 14.4 14.2 14.4 H2 Q0.8 14.4 0.8 13.2 Z" fill="#f6eaa8" stroke="#dccb86" stroke-width="1"/><path d="M0.8 4.8 H15.4" stroke="#e9da96" stroke-width="0.8"/></svg></span><span class="t" style="left:77px">Types for Lines</span></div><div class="row" style="top:425px"><span class="a" style="left:39px;top:3px"><svg class="ch" width="10" height="12" viewBox="0 0 10 12"><path d="M2.6 2.2 L6.4 6 L2.6 9.8" fill="none" stroke="#858585" stroke-width="1.35"/></svg></span><span class="a" style="left:56px;top:1px"><svg class="ic" width="16" height="16" viewBox="0 0 16 16"><path d="M0.8 3 Q0.8 1.8 2 1.8 H6 L7.4 3.4 H14.2 Q15.4 3.4 15.4 4.6 V13.2 Q15.4 14.4 14.2 14.4 H2 Q0.8 14.4 0.8 13.2 Z" fill="#f6eaa8" stroke="#dccb86" stroke-width="1"/><path d="M0.8 4.8 H15.4" stroke="#e9da96" stroke-width="0.8"/></svg></span><span class="t" style="left:77px">Types for Members</span></div><div class="row" style="top:443px"><span class="a" style="left:39px;top:3px"><svg class="ch" width="10" height="12" viewBox="0 0 10 12"><path d="M2.6 2.2 L6.4 6 L2.6 9.8" fill="none" stroke="#858585" stroke-width="1.35"/></svg></span><span class="a" style="left:56px;top:1px"><svg class="ic" width="16" height="16" viewBox="0 0 16 16"><path d="M0.8 3 Q0.8 1.8 2 1.8 H6 L7.4 3.4 H14.2 Q15.4 3.4 15.4 4.6 V13.2 Q15.4 14.4 14.2 14.4 H2 Q0.8 14.4 0.8 13.2 Z" fill="#f6eaa8" stroke="#dccb86" stroke-width="1"/><path d="M0.8 4.8 H15.4" stroke="#e9da96" stroke-width="0.8"/></svg></span><span class="t" style="left:77px">Types for Surfaces</span></div><div class="row" style="top:461px"><span class="a" style="left:39px;top:3px"><svg class="ch" width="10" height="12" viewBox="0 0 10 12"><path d="M2.6 2.2 L6.4 6 L2.6 9.8" fill="none" stroke="#858585" stroke-width="1.35"/></svg></span><span class="a" style="left:56px;top:1px"><svg class="ic" width="16" height="16" viewBox="0 0 16 16"><path d="M0.8 3 Q0.8 1.8 2 1.8 H6 L7.4 3.4 H14.2 Q15.4 3.4 15.4 4.6 V13.2 Q15.4 14.4 14.2 14.4 H2 Q0.8 14.4 0.8 13.2 Z" fill="#f6eaa8" stroke="#dccb86" stroke-width="1"/><path d="M0.8 4.8 H15.4" stroke="#e9da96" stroke-width="0.8"/></svg></span><span class="t" style="left:77px">Types for Solids</span></div><div class="row" style="top:479px"><span class="a" style="left:39px;top:3px"><svg class="ch" width="10" height="12" viewBox="0 0 10 12"><path d="M2.6 2.2 L6.4 6 L2.6 9.8" fill="none" stroke="#858585" stroke-width="1.35"/></svg></span><span class="a" style="left:56px;top:1px"><svg class="ic" width="16" height="16" viewBox="0 0 16 16"><path d="M0.8 3 Q0.8 1.8 2 1.8 H6 L7.4 3.4 H14.2 Q15.4 3.4 15.4 4.6 V13.2 Q15.4 14.4 14.2 14.4 H2 Q0.8 14.4 0.8 13.2 Z" fill="#f6eaa8" stroke="#dccb86" stroke-width="1"/><path d="M0.8 4.8 H15.4" stroke="#e9da96" stroke-width="0.8"/></svg></span><span class="t" style="left:77px">Types for Special Objects</span></div>
<div id="tabs"></div>
<div id="tab1"><svg width="42" height="27" viewBox="0 0 42 27" style="position:absolute;left:0;top:0"><rect x="16.5" y="5.5" width="12" height="9.5" fill="#fff" stroke="#4a7fd0" stroke-width="1"/><rect x="16" y="5" width="13" height="2.4" fill="#3f78d0"/><path d="M13.3 8.2 H17.2 L18.6 9.6 H23.6 V16.6 H13.3 Z" fill="#f7cf45" stroke="#c99a18" stroke-width="0.9"/><path d="M13.6 16.3 L15.8 11.4 H25.2 L23.4 16.3 Z" fill="#fbe27a" stroke="#c99a18" stroke-width="0.7"/><path d="M18.5 17.3 Q22 12.6 28.6 13.2 L27.6 18.4 Q24 16.4 22.4 19.2 Z" fill="#5f9be0" stroke="#2f67b8" stroke-width="0.6"/><path d="M24.6 18.6 V21.6" stroke="#d81e1e" stroke-width="1.1"/><circle cx="18.4" cy="17.2" r="1" fill="#e02020"/><circle cx="28.6" cy="13.4" r="1" fill="#e02020"/><circle cx="28.2" cy="18.4" r="1" fill="#e02020"/><circle cx="24.6" cy="18.8" r="1" fill="#e02020"/></svg></div>
<div class="tab" style="left:51px;width:38px"><svg width="35" height="23" viewBox="0 0 35 23"><path d="M9.8 10.6 Q16.2 3.8 22.6 10.6 Q16.2 17 9.8 10.6 Z" fill="#fff" stroke="#2a3170" stroke-width="1.3"/><circle cx="16.2" cy="10.5" r="3" fill="#3a55c8"/><circle cx="16.2" cy="10.5" r="1.5" fill="#141850"/><circle cx="15.3" cy="9.6" r="0.8" fill="#fff"/></svg></div>
<div class="tab" style="left:88px;width:41px"><svg width="39" height="23" viewBox="0 0 39 23"><rect x="12.2" y="6.8" width="9.6" height="8.4" rx="1.5" fill="#555"/><path d="M22 10 L26.3 7.4 V14.6 L22 12.2 Z" fill="#555"/></svg></div>
</body></html>
